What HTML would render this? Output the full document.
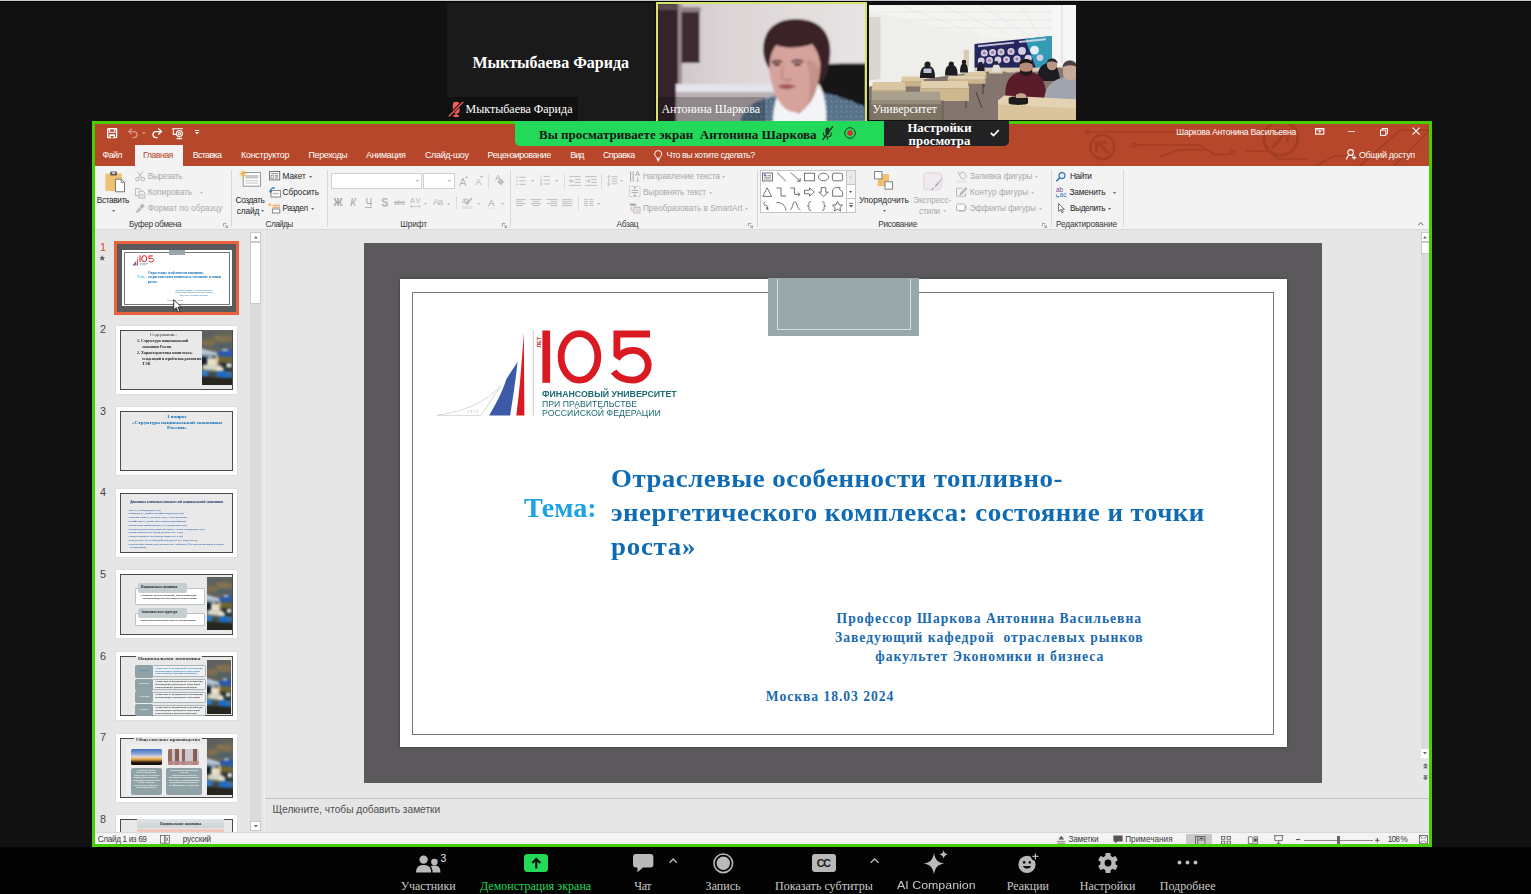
<!DOCTYPE html>
<html lang="ru">
<head>
<meta charset="utf-8">
<title>Zoom</title>
<style>
*{box-sizing:border-box;margin:0;padding:0}
html,body{width:1531px;height:894px;overflow:hidden;background:#111}
body{position:relative;font-family:"Liberation Sans",sans-serif;}
.a{position:absolute}
.t{position:absolute;white-space:nowrap;line-height:1}
svg{overflow:visible}
</style>
</head>
<body>
<!-- s_tiles -->
<div class="a" style="left:0.00px;top:0.00px;width:1531.00px;height:1.00px;background:#c6cad1;"></div>
<div class="a" style="left:0.00px;top:1.00px;width:1531.00px;height:1.00px;background:#030303;"></div>
<div class="a" style="left:0.00px;top:847.00px;width:1531.00px;height:47.00px;background:#030303;"></div>
<div class="a" style="left:447.00px;top:3.00px;width:207.00px;height:118.00px;background:#1a1a1a;"></div>
<div class="t" style="left:472.50px;top:55.10px;font-size:16.00px;color:#fff;font-family:'Liberation Serif',serif;letter-spacing:-0.023px;font-weight:bold;">Мыктыбаева Фарида</div>
<div class="a" style="left:447.00px;top:97.00px;width:131.00px;height:24.00px;background:#111;"></div>
<div class="t" style="left:465.50px;top:102.95px;font-size:12.00px;color:#fff;font-family:'Liberation Serif',serif;">Мыктыбаева Фарида</div>
<svg class="a" style="left:448.00px;top:100.00px;" width="16" height="18" viewBox="0 0 16 18"><g>
<rect x="4.800" y="1.800" width="6.800" height="11.800" rx="3.400" fill="#ef5f5c"/>
<path d="M8.200 13.600v2M5.600 16h5.200" stroke="#ef5f5c" stroke-width="1.800" fill="none"/>
<path d="M15.200 1.600L1.600 15.400" stroke="#111" stroke-width="3" fill="none"/>
<path d="M14.800 2.200L1.200 16" stroke="#ef5f5c" stroke-width="1.300" stroke-linecap="round" fill="none"/></g></svg>
<div class="a" style="left:656px;top:2px;width:211px;height:121px;border:2px solid #d7e36e;overflow:hidden;background:#d9d2d4"><svg class="a" style="left:0;top:0" width="207" height="117" viewBox="658 4 207 117">
<defs><filter id="bl" x="-5%" y="-5%" width="110%" height="110%"><feGaussianBlur stdDeviation="0.9"/></filter>
<linearGradient id="wall" x1="0" x2="1" y1="0" y2="0"><stop offset="0" stop-color="#c9c0c3"/><stop offset="0.35" stop-color="#dcd5d6"/><stop offset="1" stop-color="#e9e5e5"/></linearGradient>
<pattern id="blouse" width="5" height="5" patternUnits="userSpaceOnUse"><rect width="5" height="5" fill="#3f5f7c"/><circle cx="1.3" cy="1.3" r="0.9" fill="#c9d6e0"/><circle cx="3.8" cy="3.6" r="0.8" fill="#9fb6c8"/></pattern></defs>
<g filter="url(#bl)">
<rect x="650" y="0" width="225" height="125" fill="url(#wall)"/>
<rect x="650" y="0" width="28" height="125" fill="#35232b"/>
<rect x="658" y="4" width="20" height="6" fill="#5b4a4e"/>
<rect x="678" y="4" width="4" height="86" fill="#9a8d90"/>
<rect x="681.5" y="12" width="18" height="51" fill="#3d2b33"/>
<rect x="681.5" y="7" width="19" height="5" fill="#8f8286"/>
<rect x="676" y="84" width="100" height="8" fill="#e4e3ea"/>
<rect x="676" y="92" width="100" height="30" fill="#b9b0b4"/>
<path d="M814 70c3-6 10-7 52-6.500v46l-52 0z" fill="#131318"/>
<path d="M740 122c4-16 16-22 36-26l44-4c20 4 34 10 48 16v14z" fill="url(#blouse)"/>
<path d="M773 122c0-14 3-26 8-34l38-4c5 8 8 22 7 38z" fill="#f3f4f7"/>
<path d="M784 92c2 10 8 18 14 22c8-4 14-14 16-26z" fill="#cf9a93"/>
<path d="M768.500 60c-1-16 8-24 24-24c18 0 28 6 28 26c0 22-8 50-26 50c-16 0-25-28-26.500-52z" fill="#d6a39c"/>
<path d="M806 60c6 0 12 4 13 10c0 14-4 28-12 36c4-14 4-30-1-46z" fill="#c18c86" opacity="0.800"/>
<path d="M763.800 56c-3-22 8-37 32-37c24 0 36 14 34.500 36c-1 12-4 24-10 29c2-16 0-30-8-40c-10 4-26 5-36 1c-5 6-7 14-6.500 24c-3-3-5-8-6-13z" fill="#3a2128"/>
<path d="M772 62.500c3-2 7-2 10-0.500M791.700 62c3.500-2 8-2 11.500 0" stroke="#5a3638" stroke-width="2.200" fill="none"/>
<ellipse cx="777" cy="64.600" rx="3.200" ry="1.300" fill="#3e2a2e"/><ellipse cx="797.500" cy="64.400" rx="3.400" ry="1.300" fill="#3e2a2e"/>
<path d="M783 66c-1 6-2 10-1 13c3 1.500 7 1.500 10 0" stroke="#b9827c" stroke-width="1.600" fill="none"/>
<path d="M777.700 86c5-2.500 12-2.500 18.300 0c-5 4-13 4.500-18.300 0z" fill="#a5565a"/>
</g>
<rect x="658" y="97" width="107" height="24" fill="#000" opacity="0.22"/>
</svg></div>
<div class="t" style="left:661.50px;top:102.75px;font-size:12.00px;color:#fff;font-family:'Liberation Serif',serif;letter-spacing:-0.050px;">Антонина Шаркова</div>
<div class="a" style="left:869px;top:5px;width:207px;height:115px;overflow:hidden;background:#dcdad6"><svg class="a" style="left:0;top:0" width="207" height="115" viewBox="869 5 207 115">
<defs><filter id="bl2" x="-5%" y="-5%" width="110%" height="110%"><feGaussianBlur stdDeviation="0.55"/></filter></defs>
<g filter="url(#bl2)">
<rect x="860" y="0" width="225" height="125" fill="#efefec"/>
<path d="M860 0h225v37l-33-1l-54 2.400l-24-4l-114-26z" fill="#f3f3f2"/>
<g stroke="#dcdcdb" stroke-width="0.500" fill="none"><path d="M900 5l80 30M940 5l70 30M980 5l50 31M1020 5l20 31M880 12h190M905 20h160M935 28h120"/></g>
<path d="M869 10.500l105.200 27.800v36l-105.200 14z" fill="#eeeeeb"/>
<path d="M869 17h11.500v62l-11.500 1.500z" fill="#d9d7d0"/>
<rect x="1052" y="5" width="30" height="60" fill="#f6f6f6"/><path d="M1062 5v58" stroke="#e2e2e2" stroke-width="1.500"/>
<path d="M860 88l114-16l78-5l33 2v52h-225z" fill="#84766e"/>
<path d="M974.500 43.900L1051.700 36.100V68H974.500z" fill="#25255c"/>
<path d="M1025 38.800L1051.700 36.100V68H1036z" fill="#35b0c6" opacity="0.850"/>
<path d="M978 46.200L1014 42.600M1019 42L1046 39.300" stroke="#dcdcf0" stroke-width="1.900" opacity="0.850"/>
<g fill="#d2cee4"><circle cx="984.300" cy="52.900" r="3.500"/><circle cx="992.600" cy="52.400" r="3.500"/><circle cx="1001" cy="52" r="3.500"/><circle cx="1011" cy="51.500" r="3.600"/><circle cx="1022" cy="50.900" r="3.900"/><circle cx="1034.500" cy="50.200" r="4.400" fill="#e4f0f6"/><circle cx="981.200" cy="60.800" r="3.400"/><circle cx="989.500" cy="60.400" r="3.400"/><circle cx="998" cy="60" r="3.400"/><circle cx="1006.600" cy="59.600" r="3.400"/><circle cx="1017" cy="59" r="3.600"/><circle cx="1028.200" cy="58.400" r="3.600"/><circle cx="1040" cy="57.800" r="3.300"/></g>
<g fill="#7a3a5a" opacity="0.500"><circle cx="984.300" cy="52.900" r="1.700"/><circle cx="992.600" cy="52.400" r="1.700"/><circle cx="1001" cy="52" r="1.700"/><circle cx="1011" cy="51.500" r="1.700"/><circle cx="989.500" cy="60.400" r="1.700"/><circle cx="1006.600" cy="59.600" r="1.700"/><circle cx="1017" cy="59" r="1.700"/></g>
<rect x="963.600" y="50" width="5.400" height="17" fill="#d9ccb6"/>
<rect x="974.200" y="67.600" width="78" height="4" fill="#d8cdbb"/>
<g stroke="#2a2522" stroke-width="0.700" fill="none"><path d="M968 75v10M984 75v12M950 80v12M983 80v14M924 90v16M966 90v18M976 92l6 16M904 82v10M921 82v10M875 92v10M903 91v10"/></g>
<g><path d="M965 72h20.500l1 3.200h-22z" fill="#dcc9a6"/><path d="M964.500 75.200h22v3h-22z" fill="#c9b48c"/>
<path d="M948.600 75.500h35.500l1.500 4.300h-38z" fill="#dfcdab"/><path d="M947.600 79.800h38v4h-38z" fill="#c9b48c"/>
<path d="M989 70.500h13l1 3h-14z" fill="#dcc9a6"/><path d="M1006 69.500h9v3h-9z" fill="#dcc9a6"/>
<path d="M902 76.600h21l1 4.400h-23z" fill="#dcc9a6"/><path d="M901 81h23v5.500h-23z" fill="#c7b189"/>
<path d="M921.600 81h46l1.500 7.600h-49z" fill="#e0cfae"/><path d="M920 88.600h49v12.500h-49z" fill="#cdb88f"/>
<path d="M872.800 82h32l1 8h-34z" fill="#d9c6a2"/><path d="M871.800 90h34v6h-34z" fill="#bfa983"/>
<path d="M872.800 92l66.800-0.500l2 13h-70.800z" fill="#aaa08e"/><path d="M870.800 104.500h70.800v16h-70.800z" fill="#8f8471"/></g>
<g fill="#1f1d22"><path d="M920 78c0-9 2-12 7.500-12s7.500 3 7.500 12z"/><circle cx="927.500" cy="64.500" r="3"/><path d="M945 75.500c0-8 2-10.500 6.300-10.500s6.300 2.500 6.300 10.500z"/><circle cx="951.300" cy="64" r="2.600"/><path d="M960 72.500c0-7 1.500-9 4-9s4 2 4 9z"/><circle cx="964" cy="62" r="2.300"/><path d="M977 71c0-5 1.500-6.500 3.800-6.500s3.800 1.500 3.800 6.500z"/><circle cx="980.800" cy="63.600" r="1.900"/></g>
<path d="M923.500 68.500h8v4.500h-8z" fill="#b9c4d4"/><path d="M992 72c0-6 2-8 4.300-8s4.300 2 4.300 8z" fill="#e2ded6"/><circle cx="996.300" cy="63" r="2" fill="#2a2426"/>
<path d="M1037 81c0-12 5-18 12-18s10 6 11 18z" fill="#1b1b21"/><circle cx="1052" cy="65" r="5.200" fill="#b79686"/><path d="M1046.600 63c1-6 10.500-6 11 0.500c-3-2.500-8-2.500-11-0.500z" fill="#2a2426"/>
<path d="M1005.700 99c-2-18 5-27.500 20-27.500s20.500 9.500 20.600 27.500z" fill="#5a1f29"/>
<path d="M1019.600 64.500c0-7 13-7 13 0v5c0 7-13 7-13 0z" fill="#b98c78"/><path d="M1019.300 65c-0.500-8 14-8 13.600 0c-3-3.500-10-3.500-13.600 0z" fill="#1c1718"/><path d="M1020 69.500c2 3 10 3 12.200 0v3.500c-2 4-10 4-12.200 0z" fill="#231b1d"/>
<path d="M1044 103c0-19 11-27 34-27v30z" fill="#a0a5ad"/><path d="M1063 66c0-8 14-8 14 0v8c0 8-14 8-14 0z" fill="#c6aa9a"/><path d="M1062.600 67.500c0-9 14-9 15 0c-4-3-11-3-15 0z" fill="#4a4244"/>
<path d="M998 100l80 3.500v18h-80z" fill="#d9c49c"/><path d="M998 100.500l6-5l74 4v9l-80-4z" fill="#e4d3b3"/>
<path d="M1008.700 98.500c0-3 19.300-3 19.300 0v4.500c0 2.500-19.300 2.500-19.300 0z" fill="#1b1a1c"/>
<path d="M1016 95c2-2.500 8-2.500 10 0v3h-10z" fill="#c9a48c"/>
</g>
<rect x="869" y="100" width="75" height="20" fill="#000" opacity="0.120"/>
</svg></div>
<div class="t" style="left:872.50px;top:102.75px;font-size:12.00px;color:#fff;font-family:'Liberation Serif',serif;letter-spacing:-0.027px;">Университет</div>
<!-- s_ppt_top -->
<div class="a" style="left:92.00px;top:121.00px;width:1340.00px;height:726.00px;background:#48cc06;"></div>
<div class="a" style="left:95.00px;top:124.00px;width:1334.00px;height:42.00px;background:#b7472a;"></div>
<div class="a" style="left:95.00px;top:166.00px;width:1334.00px;height:64.00px;background:#f3f3f3;"></div>
<div class="a" style="left:95.00px;top:229.00px;width:1334.00px;height:1.00px;background:#dadada;"></div>
<div class="a" style="left:95.00px;top:230.00px;width:1334.00px;height:603.00px;background:#e6e6e6;"></div>
<div class="a" style="left:95.00px;top:833.00px;width:1334.00px;height:11.00px;background:#f3f3f3;"></div>
<div class="a" style="left:1060px;top:124px;width:369px;height:42px;overflow:hidden"><svg class="a" style="left:0.00px;top:0.00px;" width="369" height="42" viewBox="0 0 369 42"><g fill="none" stroke="#a23d23" stroke-width="1.700" opacity="0.950">
<circle cx="42.400" cy="23" r="12" stroke-width="2.600"/><path d="M36 29l11-11M37 17h10v10" stroke-width="2.600" transform="rotate(-90 42.400 23)"/>
<circle cx="27.400" cy="8" r="1.900"/><path d="M29.400 8h112"/>
<circle cx="74.300" cy="21" r="1.900"/><path d="M76.300 21h63l15 9.400h16"/><circle cx="172.900" cy="28.400" r="1.900"/>
<path d="M100 33l18-7h28"/>
<circle cx="220.800" cy="14.200" r="17" stroke-width="3"/><path d="M212 24l15-17M216 6.500h11.500v11" stroke-width="3"/>
<path d="M186 27h22l10 8h30"/>
<path d="M300 42l40-36h29"/><path d="M332 44l37-37"/><path d="M252 44l22-12h38"/>
</g></svg>
</div>
<svg class="a" style="left:107.20px;top:127.50px;" width="10.4" height="10.4" viewBox="0 0 10.4 10.4"><g fill="none" stroke="#fff"><rect x="0.700" y="0.700" width="8.900" height="8.900" rx="0.600" stroke-width="1.400"/><path d="M2.500 0.700v3.600h5.300v-3.600" stroke-width="1.100"/><rect x="2.400" y="6.300" width="5.500" height="3.300" fill="#fff" stroke="none"/><rect x="3.700" y="8" width="2.900" height="1.700" fill="#b7472a" stroke="none"/></g></svg>
<svg class="a" style="left:128.00px;top:127.50px;" width="10" height="10" viewBox="0 0 10 10"><g fill="none" stroke="#d99886" stroke-width="1.3"><path d="M0.8 3.6h5.2a3 3 0 0 1 0 6h-1.6"/><path d="M3.6 0.8l-2.8 2.8l2.8 2.8"/></g></svg>
<svg class="a" style="left:141.60px;top:131.60px;" width="4" height="2.4" viewBox="0 0 4 2.4"><path d="M0 0h3.6l-1.8 2.2z" fill="#d99886"/></svg>
<svg class="a" style="left:152.00px;top:127.50px;" width="10" height="10" viewBox="0 0 10 10"><g fill="none" stroke="#fff" stroke-width="1.4"><path d="M9.2 3.6h-5.2a3 3 0 0 0 0 6h1.6"/><path d="M6.4 0.6l3 3l-3 3"/></g></svg>
<svg class="a" style="left:172.00px;top:127.50px;" width="11.5" height="11.5" viewBox="0 0 11.5 11.5"><g fill="none" stroke="#fff" stroke-width="1.1"><path d="M0.3 0.8h10.6M1.3 0.8v5.6h3.4"/><circle cx="7.4" cy="5.6" r="3"/><circle cx="7.4" cy="5.6" r="1.1"/><path d="M7.4 8.6v1.6M4.6 10.6h5.6"/></g></svg>
<svg class="a" style="left:195.20px;top:130.40px;" width="4.4" height="4.4" viewBox="0 0 4.4 4.4"><path d="M0 0h4.2v1h-4.2zM0 2.1h4.2l-2.1 2.1z" fill="#fff"/></svg>
<div class="t" style="left:1176.30px;top:128.32px;font-size:8.60px;color:#fff;letter-spacing:-0.236px;">Шаркова Антонина Васильевна</div>
<svg class="a" style="left:1314.80px;top:128.20px;" width="9.4" height="6.8" viewBox="0 0 9.4 6.8"><g fill="none" stroke="#fff" stroke-width="1.1"><rect x="0.55" y="0.55" width="8.3" height="5.6"/><path d="M0.5 2h8.4M4.7 5.2v-2.4M3.5 3.9l1.2-1.2l1.2 1.2" stroke-width="0.9"/></g></svg>
<div class="a" style="left:1348.00px;top:131.30px;width:7.20px;height:1.10px;background:#f0d6ce;"></div>
<svg class="a" style="left:1379.60px;top:127.60px;" width="8" height="8" viewBox="0 0 8 8"><g fill="none" stroke="#fff" stroke-width="1"><rect x="0.5" y="2.1" width="5.3" height="5.3"/><path d="M2.2 2v-1.5h5.3v5.3h-1.6"/></g></svg>
<svg class="a" style="left:1411.60px;top:127.40px;" width="8.2" height="8.2" viewBox="0 0 8.2 8.2"><path d="M0.6 0.6l7 7M7.6 0.6l-7 7" stroke="#fff" stroke-width="1.15" fill="none"/></svg>
<div class="a" style="left:134.50px;top:145.00px;width:48.50px;height:21.00px;background:#f3f3f3;"></div>
<div class="t" style="left:102.50px;top:150.67px;font-size:8.90px;color:#fff;letter-spacing:-0.594px;">Файл</div>
<div class="t" style="left:143.00px;top:150.67px;font-size:8.90px;color:#b7472a;letter-spacing:-0.562px;">Главная</div>
<div class="t" style="left:192.70px;top:150.67px;font-size:8.90px;color:#fff;letter-spacing:-0.630px;">Вставка</div>
<div class="t" style="left:241.00px;top:150.67px;font-size:8.90px;color:#fff;letter-spacing:-0.225px;">Конструктор</div>
<div class="t" style="left:308.60px;top:150.67px;font-size:8.90px;color:#fff;letter-spacing:-0.364px;">Переходы</div>
<div class="t" style="left:366.10px;top:150.67px;font-size:8.90px;color:#fff;letter-spacing:-0.283px;">Анимация</div>
<div class="t" style="left:424.90px;top:150.67px;font-size:8.90px;color:#fff;letter-spacing:-0.255px;">Слайд-шоу</div>
<div class="t" style="left:487.60px;top:150.67px;font-size:8.90px;color:#fff;letter-spacing:-0.387px;">Рецензирование</div>
<div class="t" style="left:570.20px;top:150.67px;font-size:8.90px;color:#fff;letter-spacing:-0.851px;">Вид</div>
<div class="t" style="left:602.90px;top:150.67px;font-size:8.90px;color:#fff;letter-spacing:-0.436px;">Справка</div>
<div class="t" style="left:666.60px;top:150.67px;font-size:8.90px;color:#fff;letter-spacing:-0.457px;">Что вы хотите сделать?</div>
<svg class="a" style="left:654.00px;top:149.60px;" width="8.4" height="11.6" viewBox="0 0 8.4 11.6"><g fill="none" stroke="#fff" stroke-width="1"><path d="M2.6 8.2c0-1.4-1.9-2.2-1.9-4.2a3.5 3.5 0 0 1 7 0c0 2-1.9 2.8-1.9 4.2z"/><path d="M2.8 9.6h2.8M3.2 10.9h2"/></g></svg>
<svg class="a" style="left:1345.60px;top:149.40px;" width="10.6" height="11.2" viewBox="0 0 10.6 11.2"><g fill="none" stroke="#fff" stroke-width="1.1"><circle cx="4.6" cy="3.4" r="2.8"/><path d="M0.5 10.6c0.2-3 1.8-4.4 4.1-4.4c1 0 1.8 0.3 2.4 0.8"/><path d="M8.2 6.6v4M6.2 8.6h4"/></g></svg>
<div class="t" style="left:1359.00px;top:151.17px;font-size:8.90px;color:#fff;letter-spacing:-0.318px;">Общий доступ</div>
<!-- s_ribbon -->
<svg class="a" style="left:104.50px;top:171.20px;" width="20" height="21.2" viewBox="0 0 20 21.2"><rect x="0.3" y="2.6" width="16.6" height="17.4" rx="0.8" fill="#eec274"/>
<rect x="5.2" y="0.4" width="6.8" height="4.2" rx="0.8" fill="#5f5f5f"/><rect x="7.2" y="1.3" width="2.8" height="1.5" fill="#f3f3f3"/>
<path d="M10.5 8.2h5.8l3.2 3.2v9.4h-9z" fill="#fff" stroke="#6a6a6a" stroke-width="0.9"/><path d="M16.2 8.3v3.2h3.2" fill="none" stroke="#6a6a6a" stroke-width="0.8"/></svg>
<div class="t" style="left:96.80px;top:195.97px;font-size:8.30px;color:#262626;letter-spacing:-0.369px;">Вставить</div>
<svg class="a" style="left:111.60px;top:209.60px;" width="3.4" height="2.2" viewBox="0 0 3.4 2.2"><path d="M0 0h3.2l-1.6 2z" fill="#6a6a6a"/></svg>
<svg class="a" style="left:134.60px;top:171.40px;" width="10.4" height="10.4" viewBox="0 0 10.4 10.4"><g fill="none" stroke="#b4b4b4" stroke-width="1"><path d="M2.4 0.4l4.6 6.6M8 0.4l-4.6 6.6"/><circle cx="2.5" cy="8.2" r="1.8"/><circle cx="7.9" cy="8.2" r="1.8"/></g></svg>
<div class="t" style="left:147.70px;top:172.27px;font-size:8.30px;color:#a9a9a9;letter-spacing:-0.317px;">Вырезать</div>
<svg class="a" style="left:134.60px;top:187.60px;" width="10.6" height="10.6" viewBox="0 0 10.6 10.6"><g fill="none" stroke="#b4b4b4" stroke-width="0.9"><path d="M0.5 0.5h4l1.6 1.6v5.6h-5.6z"/><path d="M4 3.2h4.2l1.8 1.8v5.2h-6z" fill="#f3f3f3"/><path d="M5.2 6.4h3.4M5.2 8h3.4" stroke-width="0.7"/></g></svg>
<div class="t" style="left:147.70px;top:188.17px;font-size:8.30px;color:#a9a9a9;letter-spacing:-0.021px;">Копировать</div>
<svg class="a" style="left:199.80px;top:192.00px;" width="3.4" height="2.2" viewBox="0 0 3.4 2.2"><path d="M0 0h3.2l-1.6 2z" fill="#bcbcbc"/></svg>
<svg class="a" style="left:134.60px;top:203.40px;" width="11" height="10.6" viewBox="0 0 11 10.6"><g fill="#b4b4b4"><path d="M7.2 0.6l2.6 2.6l-3 2.6l-2.2-2.2z"/><path d="M4.2 4l2.4 2.4l-3.6 3.4l-2.8-0.4z" fill="#c9b7c4"/></g></svg>
<div class="t" style="left:147.70px;top:204.17px;font-size:8.30px;color:#a9a9a9;letter-spacing:0.017px;">Формат по образцу</div>
<div class="t" style="left:129.00px;top:220.07px;font-size:8.30px;color:#3a3a3a;letter-spacing:-0.336px;">Буфер обмена</div>
<svg class="a" style="left:222.60px;top:222.80px;" width="5" height="5" viewBox="0 0 5 5"><g fill="none" stroke="#8c8c8c" stroke-width="0.8"><path d="M0.4 3.2v-2.8h2.8"/><path d="M2 2l2.4 2.4M4.5 2.6v1.9h-1.9"/></g></svg>
<div class="a" style="left:230.50px;top:169.50px;width:1.00px;height:57.50px;background:#d8d8d8;"></div>
<svg class="a" style="left:238.60px;top:169.80px;" width="22" height="19.4" viewBox="0 0 22 19.4"><rect x="4.2" y="2.6" width="17.2" height="13.6" fill="#fff" stroke="#8a8a8a" stroke-width="0.9"/>
<rect x="6.4" y="5" width="12.8" height="3.6" fill="#c9c9c9"/><path d="M6.4 10.8h12.8M6.4 13h12.8" stroke="#b5b5b5" stroke-width="0.8"/>
<g stroke="#f0b13c" stroke-width="1"><path d="M4 0.2v7.2M0.4 3.8h7.2M1.5 1.3l5 5M6.5 1.3l-5 5"/></g></svg>
<div class="t" style="left:235.50px;top:195.97px;font-size:8.30px;color:#262626;letter-spacing:-0.357px;">Создать</div>
<div class="t" style="left:236.70px;top:206.67px;font-size:8.30px;color:#262626;letter-spacing:-0.122px;">слайд</div>
<svg class="a" style="left:261.20px;top:210.40px;" width="3.4" height="2.2" viewBox="0 0 3.4 2.2"><path d="M0 0h3.2l-1.6 2z" fill="#6a6a6a"/></svg>
<svg class="a" style="left:269.00px;top:171.00px;" width="11.4" height="9.6" viewBox="0 0 11.4 9.6"><g fill="none" stroke="#6a6a6a" stroke-width="0.9"><rect x="0.5" y="0.5" width="10.2" height="8.4" fill="#fff"/><path d="M2 2.4h7.2M2 4.2h2.6v3.2h-2.6zM6 4.4h3.2M6 5.8h3.2M6 7.2h3.2" stroke-width="0.7"/></g></svg>
<div class="t" style="left:282.60px;top:172.27px;font-size:8.30px;color:#262626;letter-spacing:-0.098px;">Макет</div>
<svg class="a" style="left:308.60px;top:176.20px;" width="3.4" height="2.2" viewBox="0 0 3.4 2.2"><path d="M0 0h3.2l-1.6 2z" fill="#6a6a6a"/></svg>
<svg class="a" style="left:268.60px;top:186.60px;" width="12" height="10.6" viewBox="0 0 12 10.6"><g fill="none"><rect x="2" y="3.6" width="9.4" height="6.4" fill="#fff" stroke="#7a7a7a" stroke-width="0.9"/><path d="M3.6 6.6h6" stroke="#c0c0c0" stroke-width="1.6"/><path d="M1.4 5.4c-0.6-3 1.6-4.8 4.6-4.4" stroke="#2e75b6" stroke-width="1.2"/><path d="M0 3.4l1.4 2.6l2-1.8z" fill="#2e75b6"/></g></svg>
<div class="t" style="left:282.60px;top:188.17px;font-size:8.30px;color:#262626;letter-spacing:-0.042px;">Сбросить</div>
<svg class="a" style="left:268.40px;top:203.00px;" width="12.4" height="10.4" viewBox="0 0 12.4 10.4"><g fill="none"><path d="M1.8 0v3.6M0 1.8h3.6" stroke="#f0b13c" stroke-width="0.9"/><path d="M4.6 2.2h7.4M4.6 4.2h7.4" stroke="#e59a3c" stroke-width="1.1"/><rect x="4.4" y="6" width="7.4" height="4" fill="#fff" stroke="#7a7a7a" stroke-width="0.9"/></g></svg>
<div class="t" style="left:282.60px;top:204.17px;font-size:8.30px;color:#262626;letter-spacing:-0.407px;">Раздел</div>
<svg class="a" style="left:310.60px;top:208.20px;" width="3.4" height="2.2" viewBox="0 0 3.4 2.2"><path d="M0 0h3.2l-1.6 2z" fill="#6a6a6a"/></svg>
<div class="t" style="left:265.60px;top:220.07px;font-size:8.30px;color:#3a3a3a;letter-spacing:-0.640px;">Слайды</div>
<div class="a" style="left:327.00px;top:169.50px;width:1.00px;height:57.50px;background:#d8d8d8;"></div>
<div class="a" style="left:331.00px;top:173.20px;width:91.40px;height:16.20px;background:#fff;border:1px solid #d0d0d0"></div>
<div class="a" style="left:422.60px;top:173.20px;width:32.20px;height:16.20px;background:#fff;border:1px solid #d0d0d0"></div>
<svg class="a" style="left:416.20px;top:180.40px;" width="3.4" height="2.2" viewBox="0 0 3.4 2.2"><path d="M0 0h3.2l-1.6 2z" fill="#b0b0b0"/></svg>
<svg class="a" style="left:448.20px;top:180.40px;" width="3.4" height="2.2" viewBox="0 0 3.4 2.2"><path d="M0 0h3.2l-1.6 2z" fill="#b0b0b0"/></svg>
<div class="t" style="left:459.30px;top:176.83px;font-size:10.60px;color:#b4b4b4;">A</div>
<svg class="a" style="left:465.40px;top:175.80px;" width="3.2" height="2.2" viewBox="0 0 3.2 2.2"><path d="M0 2h3.2l-1.6-2z" fill="#b4b4b4"/></svg>
<div class="t" style="left:475.40px;top:178.35px;font-size:8.80px;color:#b4b4b4;">A</div>
<svg class="a" style="left:480.20px;top:175.80px;" width="3.2" height="2.2" viewBox="0 0 3.2 2.2"><path d="M0 0h3.2l-1.6 2z" fill="#b4b4b4"/></svg>
<div class="a" style="left:488.40px;top:174.40px;width:1.00px;height:14.40px;background:#dcdcdc;"></div>
<svg class="a" style="left:495.00px;top:175.40px;" width="10.4" height="10.8" viewBox="0 0 10.4 10.8"><g><path d="M5.4 3.2l4 3.4l-3.2 3.8l-4-3.4z" fill="#c4bcc4"/><path d="M0.6 5.4l2-5h0.8l2 5M1.4 3.6h2.8" fill="none" stroke="#b4b4b4" stroke-width="0.8"/></g></svg>
<div class="t" style="left:333.60px;top:197.53px;font-size:10.00px;color:#a4a4a4;font-weight:bold;">Ж</div>
<div class="t" style="left:350.20px;top:197.53px;font-size:10.00px;color:#a4a4a4;font-style:italic;">К</div>
<div class="t" style="left:365.60px;top:197.53px;font-size:10.00px;color:#a4a4a4;">Ч</div>
<div class="a" style="left:365.40px;top:207.00px;width:7.00px;height:0.90px;background:#b4b4b4;"></div>
<div class="t" style="left:381.20px;top:197.53px;font-size:10.00px;color:#a4a4a4;text-shadow:0.7px 0.7px 0 #d4d4d4;">S</div>
<div class="t" style="left:394.00px;top:199.34px;font-size:7.40px;color:#b4b4b4;letter-spacing:-0.316px;text-decoration:line-through;">abc</div>
<div class="t" style="left:410.00px;top:197.31px;font-size:7.20px;color:#b4b4b4;letter-spacing:1.429px;">AV</div>
<svg class="a" style="left:410.00px;top:204.60px;" width="10.6" height="3" viewBox="0 0 10.6 3"><path d="M0.4 1.5h9.8M2 0l-1.6 1.5l1.6 1.5M8.6 0l1.6 1.5l-1.6 1.5" fill="none" stroke="#b4b4b4" stroke-width="0.7"/></svg>
<svg class="a" style="left:423.80px;top:203.00px;" width="3.4" height="2.2" viewBox="0 0 3.4 2.2"><path d="M0 0h3.2l-1.6 2z" fill="#bcbcbc"/></svg>
<div class="t" style="left:433.00px;top:198.21px;font-size:9.20px;color:#b4b4b4;letter-spacing:-1.153px;">Aa</div>
<svg class="a" style="left:446.80px;top:203.00px;" width="3.4" height="2.2" viewBox="0 0 3.4 2.2"><path d="M0 0h3.2l-1.6 2z" fill="#bcbcbc"/></svg>
<div class="a" style="left:456.20px;top:196.40px;width:1.00px;height:14.00px;background:#dcdcdc;"></div>
<div class="t" style="left:461.80px;top:197.61px;font-size:6.60px;color:#b4b4b4;letter-spacing:-1.221px;">aby</div>
<svg class="a" style="left:464.00px;top:197.00px;" width="9" height="9" viewBox="0 0 9 9"><path d="M7.6 0.4l1 1l-5.4 6l-1.8 0.4l0.4-1.8z" fill="#b9b9b9"/></svg>
<div class="a" style="left:461.60px;top:206.40px;width:11.40px;height:2.20px;background:#e6dfe6;"></div>
<svg class="a" style="left:477.40px;top:203.00px;" width="3.4" height="2.2" viewBox="0 0 3.4 2.2"><path d="M0 0h3.2l-1.6 2z" fill="#bcbcbc"/></svg>
<div class="t" style="left:488.10px;top:197.70px;font-size:9.80px;color:#a4a4a4;">A</div>
<div class="a" style="left:488.00px;top:207.20px;width:7.00px;height:1.60px;background:#ececec;"></div>
<svg class="a" style="left:501.20px;top:203.00px;" width="3.4" height="2.2" viewBox="0 0 3.4 2.2"><path d="M0 0h3.2l-1.6 2z" fill="#bcbcbc"/></svg>
<div class="t" style="left:400.20px;top:220.07px;font-size:8.30px;color:#3a3a3a;letter-spacing:-0.127px;">Шрифт</div>
<svg class="a" style="left:502.00px;top:222.80px;" width="5" height="5" viewBox="0 0 5 5"><g fill="none" stroke="#8c8c8c" stroke-width="0.8"><path d="M0.4 3.2v-2.8h2.8"/><path d="M2 2l2.4 2.4M4.5 2.6v1.9h-1.9"/></g></svg>
<div class="a" style="left:510.40px;top:169.50px;width:1.00px;height:57.50px;background:#d8d8d8;"></div>
<svg class="a" style="left:516.00px;top:175.60px;" width="10" height="10" viewBox="0 0 10 10"><g fill="none" stroke="#b4b4b4" stroke-width="0.8"><path d="M3.4 1.2h6.2M3.4 4.8h6.2M3.4 8.4h6.2"/><path d="M0.4 1.2h1.3M0.4 4.8h1.3M0.4 8.4h1.3" stroke-width="1.3"/></g></svg>
<svg class="a" style="left:531.40px;top:180.40px;" width="3.4" height="2.2" viewBox="0 0 3.4 2.2"><path d="M0 0h3.2l-1.6 2z" fill="#bcbcbc"/></svg>
<svg class="a" style="left:540.00px;top:175.20px;" width="10.4" height="11" viewBox="0 0 10.4 11"><g fill="none" stroke="#b4b4b4" stroke-width="0.8"><path d="M3.6 1.4h6.4M3.6 5.2h6.4M3.6 9h6.4"/><path d="M0.9 0.2v2.4M0.3 4.2h1.3v1l-1.3 1h1.4M0.3 7.8h1.3v1.2h-0.9h0.9v1.2h-1.3" stroke-width="0.6"/></g></svg>
<svg class="a" style="left:555.00px;top:180.40px;" width="3.4" height="2.2" viewBox="0 0 3.4 2.2"><path d="M0 0h3.2l-1.6 2z" fill="#bcbcbc"/></svg>
<div class="a" style="left:564.20px;top:174.40px;width:1.00px;height:14.40px;background:#dcdcdc;"></div>
<svg class="a" style="left:568.80px;top:175.60px;" width="12" height="10" viewBox="0 0 12 10"><g fill="none" stroke="#b4b4b4" stroke-width="0.8"><path d="M0.2 0.6h11.6M6.2 3.6h5.6M6.2 6.4h5.6M0.2 9.4h11.6"/><path d="M0.6 5h4.6M2.4 3.2l-1.8 1.8l1.8 1.8" stroke-width="0.9"/></g></svg>
<svg class="a" style="left:585.00px;top:175.60px;" width="12" height="10" viewBox="0 0 12 10"><g fill="none" stroke="#b4b4b4" stroke-width="0.8"><path d="M0.2 0.6h11.6M6.2 3.6h5.6M6.2 6.4h5.6M0.2 9.4h11.6"/><path d="M0.4 5h4.6M3.2 3.2l1.8 1.8l-1.8 1.8" stroke-width="0.9"/></g></svg>
<div class="a" style="left:601.20px;top:174.40px;width:1.00px;height:14.40px;background:#dcdcdc;"></div>
<svg class="a" style="left:606.60px;top:175.20px;" width="10.6" height="11" viewBox="0 0 10.6 11"><g fill="none" stroke="#b4b4b4" stroke-width="0.8"><path d="M4.6 1.6h5.8M4.6 4h5.8M4.6 6.4h5.8M4.6 8.8h5.8"/><path d="M1.8 0.6v9.8M0.2 2.2l1.6-1.6l1.6 1.6M0.2 8.8l1.6 1.6l1.6-1.6" stroke-width="0.8"/></g></svg>
<svg class="a" style="left:620.40px;top:180.40px;" width="3.4" height="2.2" viewBox="0 0 3.4 2.2"><path d="M0 0h3.2l-1.6 2z" fill="#bcbcbc"/></svg>
<svg class="a" style="left:516.00px;top:198.60px;" width="10.4" height="8" viewBox="0 0 10.4 8"><path d="M0 0.6H10M0 2.6H6.6M0 4.6H10M0 6.6H6.6" stroke="#b4b4b4" stroke-width="0.8" fill="none"/></svg>
<svg class="a" style="left:531.40px;top:198.60px;" width="10.4" height="8" viewBox="0 0 10.4 8"><path d="M0 0.6H10.2M1.8 2.6H8.4M0 4.6H10.2M1.8 6.6H8.4" stroke="#b4b4b4" stroke-width="0.8" fill="none"/></svg>
<svg class="a" style="left:546.70px;top:198.60px;" width="10.4" height="8" viewBox="0 0 10.4 8"><path d="M0 0.6H10.2M3.6 2.6H10.2M0 4.6H10.2M3.6 6.6H10.2" stroke="#b4b4b4" stroke-width="0.8" fill="none"/></svg>
<svg class="a" style="left:562.00px;top:198.60px;" width="10.4" height="8" viewBox="0 0 10.4 8"><path d="M0 0.6H10.2M0 2.6H10.2M0 4.6H10.2M0 6.6H10.2" stroke="#b4b4b4" stroke-width="0.8" fill="none"/></svg>
<div class="a" style="left:578.00px;top:196.40px;width:1.00px;height:14.00px;background:#dcdcdc;"></div>
<svg class="a" style="left:583.80px;top:198.60px;" width="10.4" height="8" viewBox="0 0 10.4 8"><path d="M0 0.6H4M5.4 0.6H9.4M0 2.6H4M5.4 2.6H9.4M0 4.6H4M5.4 4.6H9.4M0 6.6H4M5.4 6.6H9.4" stroke="#b4b4b4" stroke-width="0.8" fill="none"/></svg>
<svg class="a" style="left:597.40px;top:203.00px;" width="3.4" height="2.2" viewBox="0 0 3.4 2.2"><path d="M0 0h3.2l-1.6 2z" fill="#bcbcbc"/></svg>
<svg class="a" style="left:629.60px;top:170.60px;" width="10.6" height="11.2" viewBox="0 0 10.6 11.2"><g fill="none" stroke="#9c9c9c" stroke-width="0.9"><path d="M0.6 0.4v10.4M3.2 0.4v10.4"/><path d="M5.6 5l1.6-4.4h0.8l1.6 4.4M6.2 3.4h2.8" stroke-width="0.7"/><path d="M7.6 6v4.6M6.2 9.2l1.4 1.6l1.4-1.6" stroke="#c7a7c1" stroke-width="0.8"/></g></svg>
<div class="t" style="left:642.90px;top:172.27px;font-size:8.30px;color:#a9a9a9;letter-spacing:-0.093px;">Направление текста</div>
<svg class="a" style="left:722.40px;top:176.20px;" width="3.4" height="2.2" viewBox="0 0 3.4 2.2"><path d="M0 0h3.2l-1.6 2z" fill="#bcbcbc"/></svg>
<svg class="a" style="left:629.40px;top:186.40px;" width="11.6" height="11.2" viewBox="0 0 11.6 11.2"><g fill="none" stroke="#b9a9b7" stroke-width="0.8"><rect x="0.4" y="0.4" width="10.6" height="10.2" stroke-dasharray="1.4 1"/><path d="M2.6 4.4h6.4M2.6 6.6h6.4" stroke="#9c9c9c"/><path d="M5.8 0.8v2.6M4.8 1.8l1-1l1 1M5.8 10.2v-2.6M4.8 9.2l1 1l1-1" stroke="#9c9c9c" stroke-width="0.7"/></g></svg>
<div class="t" style="left:642.90px;top:188.17px;font-size:8.30px;color:#a9a9a9;letter-spacing:-0.111px;">Выровнять текст</div>
<svg class="a" style="left:708.60px;top:192.00px;" width="3.4" height="2.2" viewBox="0 0 3.4 2.2"><path d="M0 0h3.2l-1.6 2z" fill="#bcbcbc"/></svg>
<svg class="a" style="left:629.40px;top:202.60px;" width="11.6" height="10.6" viewBox="0 0 11.6 10.6"><g fill="none"><path d="M0.4 0.6h6l1.2 2.2h-6z" fill="#a9a9a9"/><path d="M2.2 3.8v3.6h2" stroke="#c7a7c1" stroke-width="0.8"/><rect x="4.8" y="4.2" width="6.2" height="5.8" stroke="#b9a9b7" stroke-width="0.8"/><path d="M6.2 6.2h3.4M6.2 8h3.4" stroke="#b9b9b9" stroke-width="0.7"/></g></svg>
<div class="t" style="left:642.90px;top:204.17px;font-size:8.30px;color:#a9a9a9;letter-spacing:-0.042px;">Преобразовать в SmartArt</div>
<svg class="a" style="left:745.00px;top:208.20px;" width="3.4" height="2.2" viewBox="0 0 3.4 2.2"><path d="M0 0h3.2l-1.6 2z" fill="#bcbcbc"/></svg>
<div class="t" style="left:616.60px;top:220.07px;font-size:8.30px;color:#3a3a3a;letter-spacing:-0.346px;">Абзац</div>
<svg class="a" style="left:748.20px;top:222.80px;" width="5" height="5" viewBox="0 0 5 5"><g fill="none" stroke="#8c8c8c" stroke-width="0.8"><path d="M0.4 3.2v-2.8h2.8"/><path d="M2 2l2.4 2.4M4.5 2.6v1.9h-1.9"/></g></svg>
<div class="a" style="left:756.60px;top:169.50px;width:1.00px;height:57.50px;background:#d8d8d8;"></div>
<div class="a" style="left:760.20px;top:170.10px;width:95.60px;height:42.90px;background:#fff;border:1px solid #c6c6c6"></div>
<div class="a" style="left:846.00px;top:170.60px;width:9.30px;height:14.00px;background:#e9e9e9;"></div>
<div class="a" style="left:846.00px;top:170.10px;width:1.00px;height:42.90px;background:#c6c6c6;"></div>
<div class="a" style="left:846.00px;top:184.40px;width:9.80px;height:1.00px;background:#c6c6c6;"></div>
<div class="a" style="left:846.00px;top:198.40px;width:9.80px;height:1.00px;background:#c6c6c6;"></div>
<svg class="a" style="left:849.40px;top:176.40px;" width="3.4" height="2.2" viewBox="0 0 3.4 2.2"><path d="M0 2h3.2l-1.6-2z" fill="#c9c9c9"/></svg>
<svg class="a" style="left:849.20px;top:191.00px;" width="3.4" height="2.2" viewBox="0 0 3.4 2.2"><path d="M0 0h3.2l-1.6 2z" fill="#555"/></svg>
<svg class="a" style="left:848.80px;top:203.40px;" width="4.4" height="5" viewBox="0 0 4.4 5"><path d="M0 0.4h4.2" stroke="#555" stroke-width="0.8"/><path d="M0 2h4.2l-2.1 2.6z" fill="#555"/></svg>
<svg class="a" style="left:761.80px;top:172.40px;" width="11" height="10" viewBox="0 0 11 10"><g fill="none" stroke="#4c4c4c" stroke-width="0.78"><rect x="0.5" y="1" width="10" height="8"/><path d="M2 3.4h2.6M5.4 3.4h3.6M2 5.2h7M2 7h7" stroke-width="0.6"/><path d="M1.8 4.2l1-2.4l1 2.4" stroke="#2e5fb0" stroke-width="0.7"/></g></svg>
<svg class="a" style="left:776.30px;top:172.40px;" width="11" height="10" viewBox="0 0 11 10"><g fill="none" stroke="#4c4c4c" stroke-width="0.78"><path d="M1 0.6l9 8.8"/></g></svg>
<svg class="a" style="left:790.40px;top:172.40px;" width="11" height="10" viewBox="0 0 11 10"><g fill="none" stroke="#4c4c4c" stroke-width="0.78"><path d="M0.6 0.6l9.6 8.6M10.2 6v3.2h-3.4"/></g></svg>
<svg class="a" style="left:803.60px;top:172.40px;" width="11" height="10" viewBox="0 0 11 10"><g fill="none" stroke="#4c4c4c" stroke-width="0.78"><rect x="0.4" y="1.2" width="10.2" height="7.6"/></g></svg>
<svg class="a" style="left:817.50px;top:172.40px;" width="11" height="10" viewBox="0 0 11 10"><g fill="none" stroke="#4c4c4c" stroke-width="0.78"><ellipse cx="5.5" cy="5" rx="5" ry="3.8"/></g></svg>
<svg class="a" style="left:831.60px;top:172.40px;" width="11" height="10" viewBox="0 0 11 10"><g fill="none" stroke="#4c4c4c" stroke-width="0.78"><rect x="0.4" y="1.2" width="10.2" height="7.6" rx="1.8"/></g></svg>
<svg class="a" style="left:761.80px;top:186.70px;" width="11" height="10" viewBox="0 0 11 10"><g fill="none" stroke="#4c4c4c" stroke-width="0.78"><path d="M5.2 0.8l4.4 8.6h-8.8z"/></g></svg>
<svg class="a" style="left:776.30px;top:186.70px;" width="11" height="10" viewBox="0 0 11 10"><g fill="none" stroke="#4c4c4c" stroke-width="0.78"><path d="M0.4 1h4.6v8h5.2"/></g></svg>
<svg class="a" style="left:790.40px;top:186.70px;" width="11" height="10" viewBox="0 0 11 10"><g fill="none" stroke="#4c4c4c" stroke-width="0.78"><path d="M0.2 1h4.4v6.4h5.2M7.8 5.4l2.2 2l-2.2 2"/></g></svg>
<svg class="a" style="left:803.60px;top:186.70px;" width="11" height="10" viewBox="0 0 11 10"><g fill="none" stroke="#4c4c4c" stroke-width="0.78"><path d="M0.6 3.2h5v-2.4l4.8 4.2l-4.8 4.2v-2.4h-5z"/></g></svg>
<svg class="a" style="left:817.50px;top:186.70px;" width="11" height="10" viewBox="0 0 11 10"><g fill="none" stroke="#4c4c4c" stroke-width="0.78"><path d="M3.2 0.6h4.6v4.6h2.4l-4.7 4.4l-4.7-4.4h2.4z"/></g></svg>
<svg class="a" style="left:831.60px;top:186.70px;" width="11" height="10" viewBox="0 0 11 10"><g fill="none" stroke="#4c4c4c" stroke-width="0.78"><path d="M0.6 9.2v-6.4l2.6-2.2h5c-1 1.6-1 2.2 0.4 2.6c1.6 0.4 2 1.6 2 2.6v3.4z"/></g></svg>
<svg class="a" style="left:761.80px;top:200.80px;" width="11" height="10" viewBox="0 0 11 10"><g fill="none" stroke="#4c4c4c" stroke-width="0.78"><path d="M3.4 0.6c-2 1.6-2.4 3.4-0.2 3.6c2.6 0.2 3.6 1.6 1.4 3.4l1.8 1.8M4.6 5.8v1.8l2 0.2"/></g></svg>
<svg class="a" style="left:776.30px;top:200.80px;" width="11" height="10" viewBox="0 0 11 10"><g fill="none" stroke="#4c4c4c" stroke-width="0.78"><path d="M0.4 1.4c5 0 9 2.4 9.6 8"/></g></svg>
<svg class="a" style="left:790.40px;top:200.80px;" width="11" height="10" viewBox="0 0 11 10"><g fill="none" stroke="#4c4c4c" stroke-width="0.78"><path d="M0.200 8.800c2.600-0.600 2.200-8 4.600-8s2.200 7.600 5.600 8.200"/></g></svg>
<svg class="a" style="left:803.60px;top:200.80px;" width="11" height="10" viewBox="0 0 11 10"><g fill="none" stroke="#4c4c4c" stroke-width="0.78"><path d="M7 0.500c-1.700 0-2.100 0.700-2.100 1.900v1.300c0 0.900-0.500 1.300-1.500 1.300c1 0 1.500 0.400 1.500 1.300v1.300c0 1.200 0.400 1.900 2.100 1.900"/></g></svg>
<svg class="a" style="left:817.50px;top:200.80px;" width="11" height="10" viewBox="0 0 11 10"><g fill="none" stroke="#4c4c4c" stroke-width="0.78"><path d="M4 0.500c1.700 0 2.100 0.700 2.100 1.900v1.300c0 0.900 0.500 1.300 1.500 1.300c-1 0-1.500 0.400-1.500 1.300v1.300c0 1.200-0.400 1.900-2.100 1.900"/></g></svg>
<svg class="a" style="left:831.60px;top:200.80px;" width="11" height="10" viewBox="0 0 11 10"><g fill="none" stroke="#4c4c4c" stroke-width="0.78"><path d="M5.5 0.6l1.5 3.2l3.5 0.4l-2.6 2.4l0.7 3.4l-3.1-1.8l-3.1 1.8l0.7-3.4l-2.6-2.4l3.5-0.4z"/></g></svg>
<svg class="a" style="left:874.00px;top:171.00px;" width="19.4" height="19" viewBox="0 0 19.4 19"><rect x="3.6" y="3.2" width="11.6" height="12" fill="#f0c16f"/><rect x="0.5" y="0.5" width="7.4" height="7.4" fill="#fff" stroke="#7a7a7a" stroke-width="0.9"/><rect x="11" y="10.8" width="7.6" height="7.4" fill="#fff" stroke="#7a7a7a" stroke-width="0.9"/></svg>
<div class="t" style="left:859.20px;top:195.97px;font-size:8.30px;color:#262626;letter-spacing:0.021px;">Упорядочить</div>
<svg class="a" style="left:883.00px;top:209.60px;" width="3.4" height="2.2" viewBox="0 0 3.4 2.2"><path d="M0 0h3.2l-1.6 2z" fill="#6a6a6a"/></svg>
<svg class="a" style="left:922.60px;top:171.60px;" width="21.4" height="21" viewBox="0 0 21.4 21"><g fill="none"><path d="M4 0.8h11.6c2 0 3.2 1.2 3.2 3.2v8c0 4-2 6-6 6h-8.800c-2 0-3.2-1.200-3.200-3.200v-10.800c0-2 1.200-3.200 3.200-3.200z" fill="#f0e9ef" stroke="#d9cfd8" stroke-width="0.9"/><path d="M20.600 4.800l-6.400 9.200l-2.600 1.800l0.800-3z" fill="#b5b5b5"/><path d="M11.400 15.800c-1 1.600-2.200 2.600-4 2.800c1-0.600 1.400-1.600 1.600-3z" fill="#b5b5b5"/></g></svg>
<div class="t" style="left:913.00px;top:195.97px;font-size:8.30px;color:#a9a9a9;letter-spacing:-0.041px;">Экспресс-</div>
<div class="t" style="left:919.00px;top:206.67px;font-size:8.30px;color:#a9a9a9;letter-spacing:-0.217px;">стили</div>
<svg class="a" style="left:943.00px;top:210.40px;" width="3.4" height="2.2" viewBox="0 0 3.4 2.2"><path d="M0 0h3.2l-1.6 2z" fill="#bcbcbc"/></svg>
<svg class="a" style="left:956.00px;top:170.60px;" width="11.6" height="11.6" viewBox="0 0 11.6 11.6"><g fill="none" stroke="#a9a9a9" stroke-width="0.8"><path d="M3.600 3.200l3.400-2.600l3.800 4.600l-4 3.200c-1.200 0-2.600-1.800-3.200-5.200z"/><path d="M3.800 3.400c-1.400-0.600-2-1.800-1.400-2.800"/></g><rect x="0" y="9.600" width="11.200" height="2" fill="#e9e2e8"/></svg>
<div class="t" style="left:969.70px;top:172.27px;font-size:8.30px;color:#a9a9a9;letter-spacing:-0.037px;">Заливка фигуры</div>
<svg class="a" style="left:1035.00px;top:176.20px;" width="3.4" height="2.2" viewBox="0 0 3.4 2.2"><path d="M0 0h3.2l-1.6 2z" fill="#bcbcbc"/></svg>
<svg class="a" style="left:956.00px;top:186.60px;" width="11.6" height="11" viewBox="0 0 11.6 11"><g fill="none" stroke="#a9a9a9" stroke-width="0.8"><path d="M7 1.200h-6.400v8h9v-3.400"/><path d="M9.800 0.600l1.200 1.200l-5.200 5.400l-1.800 0.600l0.600-1.800z" fill="#bdbdbd"/></g></svg>
<div class="t" style="left:969.70px;top:188.17px;font-size:8.30px;color:#a9a9a9;letter-spacing:0.047px;">Контур фигуры</div>
<svg class="a" style="left:1030.60px;top:192.00px;" width="3.4" height="2.2" viewBox="0 0 3.4 2.2"><path d="M0 0h3.2l-1.6 2z" fill="#bcbcbc"/></svg>
<svg class="a" style="left:956.00px;top:202.80px;" width="11.6" height="10.4" viewBox="0 0 11.6 10.4"><g><path d="M2.600 8.800h6.200c1.200-1.200 2-3.200 2-5.400l-1-1.200l-6.400 1z" fill="#c9c9c9"/><rect x="0.500" y="1" width="8.600" height="6.600" rx="1.600" fill="#fff" stroke="#a9a9a9" stroke-width="0.9"/></g></svg>
<div class="t" style="left:969.70px;top:204.17px;font-size:8.30px;color:#a9a9a9;letter-spacing:-0.221px;">Эффекты фигуры</div>
<svg class="a" style="left:1038.80px;top:208.20px;" width="3.4" height="2.2" viewBox="0 0 3.4 2.2"><path d="M0 0h3.2l-1.6 2z" fill="#bcbcbc"/></svg>
<div class="t" style="left:878.20px;top:220.07px;font-size:8.30px;color:#3a3a3a;letter-spacing:-0.338px;">Рисование</div>
<svg class="a" style="left:1042.40px;top:222.80px;" width="5" height="5" viewBox="0 0 5 5"><g fill="none" stroke="#8c8c8c" stroke-width="0.8"><path d="M0.4 3.2v-2.8h2.8"/><path d="M2 2l2.4 2.4M4.5 2.6v1.9h-1.9"/></g></svg>
<div class="a" style="left:1050.60px;top:169.50px;width:1.00px;height:57.50px;background:#d8d8d8;"></div>
<svg class="a" style="left:1056.20px;top:171.60px;" width="9.8" height="9.8" viewBox="0 0 9.8 9.8"><g fill="none" stroke="#2e6fb5"><circle cx="6" cy="3.600" r="3" stroke-width="1.100"/><path d="M3.800 5.800l-3.400 3.400" stroke-width="1.500"/></g></svg>
<div class="t" style="left:1069.90px;top:172.27px;font-size:8.30px;color:#262626;letter-spacing:-0.396px;">Найти</div>
<div class="t" style="left:1056.00px;top:186.78px;font-size:6.40px;color:#7a4aa0;">ab</div>
<div class="t" style="left:1059.60px;top:191.98px;font-size:6.40px;color:#2e6fb5;">ac</div>
<svg class="a" style="left:1056.20px;top:193.60px;" width="3.6" height="3.6" viewBox="0 0 3.6 3.6"><path d="M0.400 0.400v2.400h2.400M1.600 1.600l1.200 1.200l-1.200 0.800" fill="none" stroke="#2e6fb5" stroke-width="0.700"/></svg>
<div class="t" style="left:1069.40px;top:188.17px;font-size:8.30px;color:#262626;letter-spacing:-0.157px;">Заменить</div>
<svg class="a" style="left:1113.20px;top:192.00px;" width="3.4" height="2.2" viewBox="0 0 3.4 2.2"><path d="M0 0h3.2l-1.6 2z" fill="#6a6a6a"/></svg>
<svg class="a" style="left:1058.20px;top:202.60px;" width="7.2" height="10.4" viewBox="0 0 7.2 10.4"><path d="M0.600 0.600v7.800l2-1.800l1.400 3.200l1.200-0.600l-1.400-3h2.600z" fill="#fff" stroke="#4c4c4c" stroke-width="0.800"/></svg>
<div class="t" style="left:1069.90px;top:204.17px;font-size:8.30px;color:#262626;letter-spacing:-0.370px;">Выделить</div>
<svg class="a" style="left:1108.00px;top:208.20px;" width="3.4" height="2.2" viewBox="0 0 3.4 2.2"><path d="M0 0h3.2l-1.6 2z" fill="#6a6a6a"/></svg>
<div class="t" style="left:1056.00px;top:220.07px;font-size:8.30px;color:#3a3a3a;letter-spacing:-0.164px;">Редактирование</div>
<div class="a" style="left:1123.20px;top:169.50px;width:1.00px;height:57.50px;background:#d8d8d8;"></div>
<svg class="a" style="left:1417.60px;top:222.40px;" width="5.6" height="3.6" viewBox="0 0 5.6 3.6"><path d="M0.400 3.200l2.400-2.600l2.400 2.600" fill="none" stroke="#555" stroke-width="0.900"/></svg>
<!-- s_work -->
<div class="a" style="left:250.40px;top:232.40px;width:10.20px;height:598.60px;background:#dcdadb;"></div>
<div class="a" style="left:250.40px;top:232.40px;width:10.20px;height:10.00px;background:#fff;border:1px solid #c9c9c9"></div>
<svg class="a" style="left:253.60px;top:236.20px;" width="3.8" height="2.4" viewBox="0 0 3.8 2.4"><path d="M0 2.400h3.800l-1.900-2.400z" fill="#666"/></svg>
<div class="a" style="left:250.40px;top:242.20px;width:10.20px;height:61.40px;background:#fff;border:1px solid #c9c9c9"></div>
<div class="a" style="left:250.40px;top:820.60px;width:10.20px;height:10.20px;background:#fff;border:1px solid #c9c9c9"></div>
<svg class="a" style="left:253.60px;top:824.60px;" width="3.8" height="2.4" viewBox="0 0 3.8 2.4"><path d="M0 0h3.800l-1.900 2.400z" fill="#666"/></svg>
<div class="a" style="left:264.00px;top:231.00px;width:1.00px;height:601.00px;background:#f0f0f0;"></div>
<div class="a" style="left:1421.20px;top:232.40px;width:7.80px;height:525.40px;background:#dcdadb;"></div>
<div class="a" style="left:1421.20px;top:232.40px;width:7.80px;height:9.80px;background:#fff;border:1px solid #c9c9c9;border-right:none"></div>
<svg class="a" style="left:1423.40px;top:236.20px;" width="3.8" height="2.4" viewBox="0 0 3.8 2.4"><path d="M0 2.400h3.800l-1.900-2.400z" fill="#666"/></svg>
<div class="a" style="left:1421.20px;top:242.20px;width:7.80px;height:12.20px;background:#fff;border:1px solid #c9c9c9;border-right:none"></div>
<div class="a" style="left:1421.20px;top:748.80px;width:7.80px;height:9.00px;background:#fff;"></div>
<svg class="a" style="left:1423.40px;top:752.40px;" width="3.8" height="2.4" viewBox="0 0 3.8 2.4"><path d="M0 0h3.800l-1.900 2.400z" fill="#666"/></svg>
<svg class="a" style="left:1422.80px;top:763.00px;" width="5" height="5.4" viewBox="0 0 5 5.4"><path d="M0.200 2.600h4.600l-2.300-2.400zM0.200 5.200h4.600l-2.300-2.400z" fill="#666"/><path d="M0 2.800h5" stroke="#666" stroke-width="0.500"/></svg>
<svg class="a" style="left:1422.80px;top:774.80px;" width="5" height="5.4" viewBox="0 0 5 5.4"><path d="M0.200 0.200h4.600l-2.300 2.400zM0.200 2.800h4.600l-2.300 2.400z" fill="#666"/><path d="M0 2.600h5" stroke="#666" stroke-width="0.500"/></svg>
<div class="a" style="left:364.00px;top:243.00px;width:958.40px;height:540.00px;background:#5b595c;"></div>
<div class="a" style="left:399.80px;top:279.20px;width:887.60px;height:467.60px;background:#fff;box-shadow:0 0 3px rgba(0,0,0,0.35)"></div>
<div class="a" style="left:412.00px;top:291.60px;width:862.40px;height:443.00px;background:transparent;border:1px solid #777"></div>
<div class="a" style="left:265.00px;top:798.00px;width:1164.00px;height:1.00px;background:#c4c4c4;"></div>
<div class="t" style="left:272.60px;top:805.17px;font-size:10.20px;color:#505050;letter-spacing:-0.021px;">Щелкните, чтобы добавить заметки</div>
<!-- s_slide -->
<div class="a" style="left:768.00px;top:278.40px;width:151.00px;height:57.40px;background:#98a8ab;"></div>
<div class="a" style="left:776.60px;top:279.00px;width:134.20px;height:50.60px;background:transparent;border:0.8px solid #d6e0e0;border-top:none"></div>
<svg class="a" style="left:430.00px;top:322.00px;" width="260" height="102" viewBox="430 322 260 102"><g>
<path d="M436.800 415.400C466 411 486 402 500.500 386.200L481 415.400Z" fill="#fff" stroke="#c9c9c9" stroke-width="0.700"/>
<path d="M517.500 361.900C515.500 382 512.500 400 510.200 415.400H489.100C497 402 503 390 506.400 378.900Z" fill="#3d5aa9"/>
<path d="M523.800 332.500L524.400 415.400H516.300C519.500 392 522 360 523.800 332.500Z" fill="#da1a22"/>
<path d="M533.300 330.500V415.400" stroke="#bdbdbd" stroke-width="0.800"/>
<rect x="542.400" y="330.500" width="7.700" height="52.300" fill="#da1a22"/>
<ellipse cx="579.450" cy="356.850" rx="18.350" ry="23.250" fill="none" stroke="#da1a22" stroke-width="6.800"/>
<path d="M650 334.050H616.900V356.500" fill="none" stroke="#da1a22" stroke-width="6.900"/>
<path d="M616.900 358.800C620.500 353.400 626.500 350.400 633 350.400C641.600 350.400 648.200 357 648.200 365.300C648.200 373.600 641.400 380.100 632.400 380.100C624 380.100 617.400 376.800 613.600 371.600" fill="none" stroke="#da1a22" stroke-width="6.800"/>
</g></svg>
<div class="t" style="left:467.00px;top:410.28px;font-size:4.20px;color:#b0b0b0;font-family:'Liberation Serif',serif;letter-spacing:1.000px;">1919</div>
<div class="t" style="left:536.1px;top:341.1px;font-size:5.2px;font-weight:bold;color:#da1a22;transform:rotate(-90deg);transform-origin:center;width:8px;text-align:center;letter-spacing:0.25px">ЛЕТ</div>
<div class="t" style="left:542.40px;top:388.76px;font-size:9.50px;color:#1c6a73;font-weight:bold;transform:scaleX(0.9246);transform-origin:0 0;">ФИНАНСОВЫЙ УНИВЕРСИТЕТ</div>
<div class="t" style="left:542.40px;top:398.96px;font-size:9.50px;color:#1c6a73;transform:scaleX(0.9137);transform-origin:0 0;">ПРИ ПРАВИТЕЛЬСТВЕ</div>
<div class="t" style="left:542.40px;top:407.96px;font-size:9.50px;color:#1c6a73;transform:scaleX(0.9211);transform-origin:0 0;">РОССИЙСКОЙ ФЕДЕРАЦИИ</div>
<div class="t" style="left:523.60px;top:494.62px;font-size:27.20px;color:#1ba3e2;font-family:'Liberation Serif',serif;font-weight:bold;transform:scaleX(1.0373);transform-origin:0 0;">Тема:</div>
<div class="t" style="left:611.00px;top:465.93px;font-size:25.40px;color:#0f6bb4;font-family:'Liberation Serif',serif;letter-spacing:0.445px;font-weight:bold;transform:scaleX(1.0600);transform-origin:0 0;">Отраслевые особенности топливно-</div>
<div class="t" style="left:611.00px;top:499.83px;font-size:25.40px;color:#0f6bb4;font-family:'Liberation Serif',serif;letter-spacing:0.444px;font-weight:bold;transform:scaleX(1.0600);transform-origin:0 0;">энергетического комплекса: состояние и точки</div>
<div class="t" style="left:611.00px;top:533.53px;font-size:25.40px;color:#0f6bb4;font-family:'Liberation Serif',serif;letter-spacing:0.686px;font-weight:bold;transform:scaleX(1.0600);transform-origin:0 0;">роста»</div>
<div class="t" style="left:836.60px;top:611.71px;font-size:13.60px;color:#1a6aae;font-family:'Liberation Serif',serif;letter-spacing:1.000px;font-weight:bold;">Профессор Шаркова Антонина Васильевна</div>
<div class="t" style="left:835.00px;top:630.61px;font-size:13.60px;color:#1a6aae;font-family:'Liberation Serif',serif;letter-spacing:1.007px;font-weight:bold;white-space:pre;">Заведующий кафедрой  отраслевых рынков</div>
<div class="t" style="left:875.30px;top:650.01px;font-size:13.60px;color:#1a6aae;font-family:'Liberation Serif',serif;letter-spacing:0.999px;font-weight:bold;">факультет Экономики и бизнеса</div>
<div class="t" style="left:765.80px;top:689.91px;font-size:13.60px;color:#1a6aae;font-family:'Liberation Serif',serif;letter-spacing:0.970px;font-weight:bold;">Москва 18.03 2024</div>
<!-- s_thumbs -->
<div class="a" style="left:113.80px;top:241.10px;width:125.50px;height:73.60px;background:#e9623c;"></div>
<div class="a" style="left:116.80px;top:244.20px;width:119.60px;height:67.40px;background:#5b595c;"></div>
<div class="a" style="left:121.80px;top:249.80px;width:109.80px;height:56.30px;background:#fff;"></div>
<div class="a" style="left:123.60px;top:251.60px;width:106.10px;height:53.20px;background:transparent;border:0.6px solid #777"></div>
<div class="a" style="left:168.80px;top:249.60px;width:16.30px;height:5.30px;background:#98a8ab;"></div>
<div class="t" style="left:100.00px;top:241.76px;font-size:10.80px;color:#d24a2c;">1</div>
<svg class="a" style="left:99.00px;top:255.40px;" width="6.4" height="6" viewBox="0 0 6.4 6"><path d="M3.200 0.200l0.900 2h2.100l-1.700 1.400l0.700 2.200l-2-1.300l-2 1.300l0.700-2.200l-1.700-1.400h2.100z" fill="#555"/></svg>
<svg class="a" style="left:132.00px;top:254.00px;" width="24" height="13" viewBox="0 0 24 13"><path d="M0.600 11.400l3.600-4.400l-0.600 4.400z" fill="#3d5aa9"/><path d="M5.600 1.400l0.300 10h-1.400z" fill="#da1a22"/><g fill="none" stroke="#da1a22" stroke-width="1"><path d="M8 1.400v6.600"/><ellipse cx="12.200" cy="4.700" rx="2.500" ry="3.100"/><path d="M20.800 1.900h-3.800v2.800c3-1.400 4.600 0.200 4.400 1.800c-0.300 1.700-2.800 2.100-4.600 0.600"/></g><path d="M7.600 9.600h9M7.600 10.800h6.600" stroke="#1c6a73" stroke-width="0.500" opacity="0.700"/></svg>
<div class="t" style="left:137.00px;top:275.55px;font-size:3.40px;color:#1fb0e2;font-family:'Liberation Serif',serif;transform:scaleX(1.0947);transform-origin:0 0;">Тема:</div>
<div class="t" style="left:148.20px;top:272.17px;font-size:3.50px;color:#0f6bb4;font-family:'Liberation Serif',serif;font-weight:bold;transform:scaleX(0.9806);transform-origin:0 0;">Отраслевые особенности топливно-</div>
<div class="t" style="left:148.20px;top:276.37px;font-size:3.50px;color:#0f6bb4;font-family:'Liberation Serif',serif;font-weight:bold;transform:scaleX(0.9756);transform-origin:0 0;">энергетического комплекса: состояние и точки</div>
<div class="t" style="left:148.20px;top:280.57px;font-size:3.50px;color:#0f6bb4;font-family:'Liberation Serif',serif;font-weight:bold;transform:scaleX(0.9132);transform-origin:0 0;">роста»</div>
<div class="t" style="left:175.30px;top:289.81px;font-size:1.90px;color:#4a8cc4;font-family:'Liberation Serif',serif;font-weight:bold;transform:scaleX(1.0073);transform-origin:0 0;">Профессор Шаркова Антонина Васильевна</div>
<div class="t" style="left:175.10px;top:292.41px;font-size:1.90px;color:#4a8cc4;font-family:'Liberation Serif',serif;font-weight:bold;transform:scaleX(1.0235);transform-origin:0 0;">Заведующий кафедрой отраслевых рынков</div>
<div class="t" style="left:180.20px;top:295.01px;font-size:1.90px;color:#4a8cc4;font-family:'Liberation Serif',serif;font-weight:bold;transform:scaleX(1.0092);transform-origin:0 0;">факультет Экономики и бизнеса</div>
<div class="t" style="left:166.60px;top:299.51px;font-size:1.90px;color:#4a8cc4;font-family:'Liberation Serif',serif;font-weight:bold;transform:scaleX(1.0283);transform-origin:0 0;">Москва 18.03 2024</div>
<div class="a" style="left:116.20px;top:325.50px;width:120.60px;height:68.00px;background:#fff;outline:1px solid #dedede"></div>
<div class="a" style="left:119.90px;top:329.60px;width:113.20px;height:60.30px;background:#e9e9ea;border:1px solid #4a4a4a"></div>
<div class="t" style="left:100.00px;top:323.96px;font-size:10.80px;color:#444;">2</div>
<div class="a" style="left:201.70px;top:330.20px;width:30.70px;height:55.20px;overflow:hidden;background:#4a4e48"><svg class="a" style="left:-2px;top:-2px;filter:blur(0.9px)" width="34.70" height="59.20" viewBox="-2 -2 34.70 59.20"><g transform="scale(1.0233 0.9857)"><rect x="-3" y="-3" width="36" height="62" fill="#62645a"/>
<ellipse cx="8" cy="4" rx="9" ry="3" fill="#5a5f63"/><ellipse cx="22" cy="9" rx="9" ry="3.500" fill="#8a7450" opacity="0.800"/><ellipse cx="7" cy="13" rx="8" ry="3" fill="#86704c" opacity="0.800"/><ellipse cx="20" cy="16" rx="10" ry="2.600" fill="#4e6068" opacity="0.900"/><ellipse cx="14" cy="7" rx="4" ry="1.600" fill="#9a7a4a" opacity="0.700"/>
<path d="M-2 18.500l17 4.500v3l-17-2z" fill="#b9cadb"/><path d="M-2 23.500l12 2v3.500l-12-1z" fill="#8fa3b8"/>
<path d="M16 21.500l15-2.500v8.500h-17z" fill="#2c59a8"/><path d="M20 19.500h5v1.600h-5z" fill="#dfe6ee"/>
<path d="M12 27l19 0.500v6l-16-1z" fill="#6e6634"/>
<path d="M-2 27h7v9h-7z" fill="#17222e"/><path d="M16 33h15v9h-15z" fill="#2b3230"/>
<path d="M5 29h10.500v7h-10.500z" fill="#e6e1c2"/><path d="M13.600 26h2.400v9h-2.400z" fill="#dcb8a2"/>
<path d="M1 35l18 1v5.500l-18-1.500z" fill="#d6d4c4"/><path d="M14 38h7v3.500h-7z" fill="#ece6cf"/><path d="M24 34h5v4h-5z" fill="#e6e7e0"/>
<path d="M-2 41l8 0.500l2 5h-10z" fill="#2a7cc9"/><ellipse cx="22.500" cy="45" rx="9" ry="3.600" fill="#1b6cca"/><ellipse cx="26" cy="44" rx="3" ry="1" fill="#8a6a3a"/>
<path d="M-3 47.500c10-1.500 20 2 36 1v10h-36z" fill="#26261f"/><path d="M6 43h8v4h-8z" fill="#3a4a4a"/></g></svg></div>
<div class="t" style="left:150.00px;top:333.99px;font-size:3.60px;color:#333;font-family:'Liberation Serif',serif;transform:scaleX(1.3492);transform-origin:0 0;">Содержание:</div>
<div class="t" style="left:137.20px;top:339.99px;font-size:3.60px;color:#222;font-family:'Liberation Serif',serif;font-weight:bold;transform:scaleX(1.1224);transform-origin:0 0;">1. Структура национальной</div>
<div class="t" style="left:142.00px;top:345.59px;font-size:3.60px;color:#222;font-family:'Liberation Serif',serif;font-weight:bold;transform:scaleX(0.9574);transform-origin:0 0;">экономики России.</div>
<div class="t" style="left:137.20px;top:351.59px;font-size:3.60px;color:#222;font-family:'Liberation Serif',serif;font-weight:bold;transform:scaleX(1.1185);transform-origin:0 0;">2. Характеристика комплекса,</div>
<div class="t" style="left:142.00px;top:357.59px;font-size:3.60px;color:#222;font-family:'Liberation Serif',serif;font-weight:bold;transform:scaleX(1.1112);transform-origin:0 0;">тенденций и проблемы развития</div>
<div class="t" style="left:142.00px;top:363.19px;font-size:3.60px;color:#222;font-family:'Liberation Serif',serif;font-weight:bold;transform:scaleX(1.1270);transform-origin:0 0;">ТЭК</div>
<div class="a" style="left:116.20px;top:407.10px;width:120.60px;height:68.00px;background:#fff;outline:1px solid #dedede"></div>
<div class="a" style="left:119.90px;top:411.20px;width:113.20px;height:60.30px;background:#e9e9ea;border:1px solid #4a4a4a"></div>
<div class="t" style="left:100.00px;top:405.56px;font-size:10.80px;color:#444;">3</div>
<div class="t" style="left:166.60px;top:415.72px;font-size:3.80px;color:#0f6bb4;font-family:'Liberation Serif',serif;font-weight:bold;transform:scaleX(1.3501);transform-origin:0 0;">1 вопрос</div>
<div class="t" style="left:131.90px;top:421.62px;font-size:3.80px;color:#0f6bb4;font-family:'Liberation Serif',serif;font-weight:bold;transform:scaleX(1.3640);transform-origin:0 0;">«Структура национальной экономики</div>
<div class="t" style="left:166.60px;top:426.82px;font-size:3.80px;color:#0f6bb4;font-family:'Liberation Serif',serif;font-weight:bold;transform:scaleX(1.4370);transform-origin:0 0;">России»</div>
<div class="a" style="left:116.20px;top:488.70px;width:120.60px;height:68.00px;background:#fff;outline:1px solid #dedede"></div>
<div class="a" style="left:119.90px;top:492.80px;width:113.20px;height:60.30px;background:#e9e9ea;border:1px solid #4a4a4a"></div>
<div class="t" style="left:100.00px;top:487.16px;font-size:10.80px;color:#444;">4</div>
<div class="t" style="left:130.00px;top:500.80px;font-size:3.10px;color:#1c2a5a;font-family:'Liberation Serif',serif;font-weight:bold;transform:scaleX(1.0985);transform-origin:0 0;">Динамика ключевых показателей национальной экономики</div>
<div class="t" style="left:127.80px;top:509.74px;font-size:2.70px;color:#1f62ac;font-family:'Liberation Serif',serif;font-weight:bold;transform:scaleX(0.8390);transform-origin:0 0;">• ВВП (%, к предыдущему году)</div>
<div class="t" style="left:127.80px;top:513.44px;font-size:2.70px;color:#1f62ac;font-family:'Liberation Serif',serif;font-weight:bold;transform:scaleX(0.8329);transform-origin:0 0;">• Инфляция (%, декабрь к декабрю предыдущего года)</div>
<div class="t" style="left:127.80px;top:517.14px;font-size:2.70px;color:#1f62ac;font-family:'Liberation Serif',serif;font-weight:bold;transform:scaleX(0.7961);transform-origin:0 0;">• Ключевая ставка (%, в среднем за год, с учетом капитализ)</div>
<div class="t" style="left:127.80px;top:520.84px;font-size:2.70px;color:#1f62ac;font-family:'Liberation Serif',serif;font-weight:bold;transform:scaleX(0.8380);transform-origin:0 0;">• Безработица (%, декабрь, без сезонной корректировки)</div>
<div class="t" style="left:127.80px;top:524.54px;font-size:2.70px;color:#1f62ac;font-family:'Liberation Serif',serif;font-weight:bold;transform:scaleX(0.8249);transform-origin:0 0;">• Номинальная заработная плата (% к предыдущему году)</div>
<div class="t" style="left:127.80px;top:528.84px;font-size:2.70px;color:#1f62ac;font-family:'Liberation Serif',serif;font-weight:bold;transform:scaleX(0.7998);transform-origin:0 0;">• Реальные располагаемые доходы населения (% от ВВП к предыдущему году)</div>
<div class="t" style="left:127.80px;top:532.34px;font-size:2.70px;color:#1f62ac;font-family:'Liberation Serif',serif;font-weight:bold;transform:scaleX(0.8343);transform-origin:0 0;">• Импорт товаров и услуг (млрд долларов США в год)</div>
<div class="t" style="left:127.80px;top:536.34px;font-size:2.70px;color:#1f62ac;font-family:'Liberation Serif',serif;font-weight:bold;transform:scaleX(0.8271);transform-origin:0 0;">• Экспорт товаров и услуг (млрд долларов США в год)</div>
<div class="t" style="left:127.80px;top:540.24px;font-size:2.70px;color:#1f62ac;font-family:'Liberation Serif',serif;font-weight:bold;transform:scaleX(0.8185);transform-origin:0 0;">• Курс доллара США к рублю (рублей за доллар США, среднее за год)</div>
<div class="t" style="left:127.80px;top:544.14px;font-size:2.70px;color:#1f62ac;font-family:'Liberation Serif',serif;font-weight:bold;transform:scaleX(0.8617);transform-origin:0 0;">• Цена на нефть марки Urals (доллары США за баррель, ФОБ как поставленная, в среднем</div>
<div class="t" style="left:130.00px;top:547.34px;font-size:2.70px;color:#1f62ac;font-family:'Liberation Serif',serif;font-weight:bold;transform:scaleX(0.7976);transform-origin:0 0;">за предыдущий)</div>
<div class="a" style="left:116.20px;top:570.30px;width:120.60px;height:68.00px;background:#fff;outline:1px solid #dedede"></div>
<div class="a" style="left:119.90px;top:574.40px;width:113.20px;height:60.30px;background:#e9e9ea;border:1px solid #4a4a4a"></div>
<div class="t" style="left:100.00px;top:568.86px;font-size:10.80px;color:#444;">5</div>
<div class="a" style="left:207.20px;top:577.00px;width:25.20px;height:52.60px;overflow:hidden;background:#4a4e48"><svg class="a" style="left:-2px;top:-2px;filter:blur(0.9px)" width="29.20" height="56.60" viewBox="-2 -2 29.20 56.60"><g transform="scale(0.8400 0.9393)"><rect x="-3" y="-3" width="36" height="62" fill="#62645a"/>
<ellipse cx="8" cy="4" rx="9" ry="3" fill="#5a5f63"/><ellipse cx="22" cy="9" rx="9" ry="3.500" fill="#8a7450" opacity="0.800"/><ellipse cx="7" cy="13" rx="8" ry="3" fill="#86704c" opacity="0.800"/><ellipse cx="20" cy="16" rx="10" ry="2.600" fill="#4e6068" opacity="0.900"/><ellipse cx="14" cy="7" rx="4" ry="1.600" fill="#9a7a4a" opacity="0.700"/>
<path d="M-2 18.500l17 4.500v3l-17-2z" fill="#b9cadb"/><path d="M-2 23.500l12 2v3.500l-12-1z" fill="#8fa3b8"/>
<path d="M16 21.500l15-2.500v8.500h-17z" fill="#2c59a8"/><path d="M20 19.500h5v1.600h-5z" fill="#dfe6ee"/>
<path d="M12 27l19 0.500v6l-16-1z" fill="#6e6634"/>
<path d="M-2 27h7v9h-7z" fill="#17222e"/><path d="M16 33h15v9h-15z" fill="#2b3230"/>
<path d="M5 29h10.500v7h-10.500z" fill="#e6e1c2"/><path d="M13.600 26h2.400v9h-2.400z" fill="#dcb8a2"/>
<path d="M1 35l18 1v5.500l-18-1.500z" fill="#d6d4c4"/><path d="M14 38h7v3.500h-7z" fill="#ece6cf"/><path d="M24 34h5v4h-5z" fill="#e6e7e0"/>
<path d="M-2 41l8 0.500l2 5h-10z" fill="#2a7cc9"/><ellipse cx="22.500" cy="45" rx="9" ry="3.600" fill="#1b6cca"/><ellipse cx="26" cy="44" rx="3" ry="1" fill="#8a6a3a"/>
<path d="M-3 47.500c10-1.500 20 2 36 1v10h-36z" fill="#26261f"/><path d="M6 43h8v4h-8z" fill="#3a4a4a"/></g></svg></div>
<div class="a" style="left:134.70px;top:588.00px;width:70.70px;height:16.70px;background:#fff;border:0.7px solid #b9c2c5;border-radius:1px"></div>
<div class="a" style="left:137.50px;top:582.50px;width:49.80px;height:10.20px;background:#c5ced1;border-radius:2px"></div>
<div class="t" style="left:140.60px;top:586.19px;font-size:3.00px;color:#222;font-family:'Liberation Serif',serif;font-weight:bold;transform:scaleX(1.0189);transform-origin:0 0;">Национальная экономика</div>
<div class="t" style="left:140.40px;top:594.69px;font-size:2.40px;color:#222;font-family:'Liberation Serif',serif;font-weight:bold;transform:scaleX(1.1009);transform-origin:0 0;">• основная система экономик, обеспечивающая</div>
<div class="t" style="left:143.00px;top:598.09px;font-size:2.40px;color:#222;font-family:'Liberation Serif',serif;font-weight:bold;transform:scaleX(1.1928);transform-origin:0 0;">воспроизводство потенциала и населения</div>
<div class="a" style="left:134.70px;top:613.40px;width:70.70px;height:12.90px;background:#fff;border:0.7px solid #b9c2c5;border-radius:1px"></div>
<div class="a" style="left:137.50px;top:607.50px;width:49.80px;height:10.70px;background:#c5ced1;border-radius:2px"></div>
<div class="t" style="left:140.60px;top:611.44px;font-size:3.00px;color:#222;font-family:'Liberation Serif',serif;font-weight:bold;transform:scaleX(1.0079);transform-origin:0 0;">Экономическая структура</div>
<div class="t" style="left:140.40px;top:620.19px;font-size:2.40px;color:#222;font-family:'Liberation Serif',serif;font-weight:bold;transform:scaleX(1.0805);transform-origin:0 0;">• многоотраслевая совокупность хозяйственных</div>
<div class="a" style="left:116.20px;top:651.90px;width:120.60px;height:68.00px;background:#fff;outline:1px solid #dedede"></div>
<div class="a" style="left:119.90px;top:656.00px;width:113.20px;height:60.30px;background:#e9e9ea;border:1px solid #4a4a4a"></div>
<div class="t" style="left:100.00px;top:650.56px;font-size:10.80px;color:#444;">6</div>
<div class="a" style="left:136.00px;top:655.80px;width:66.00px;height:4.80px;background:#e9e9ea;"></div>
<div class="t" style="left:137.80px;top:656.65px;font-size:4.00px;color:#333;font-family:'Liberation Serif',serif;font-weight:bold;transform:scaleX(1.3173);transform-origin:0 0;">Национальная экономика</div>
<div class="a" style="left:207.20px;top:659.70px;width:24.00px;height:53.90px;overflow:hidden;background:#4a4e48"><svg class="a" style="left:-2px;top:-2px;filter:blur(0.9px)" width="28.00" height="57.90" viewBox="-2 -2 28.00 57.90"><g transform="scale(0.8000 0.9625)"><rect x="-3" y="-3" width="36" height="62" fill="#62645a"/>
<ellipse cx="8" cy="4" rx="9" ry="3" fill="#5a5f63"/><ellipse cx="22" cy="9" rx="9" ry="3.500" fill="#8a7450" opacity="0.800"/><ellipse cx="7" cy="13" rx="8" ry="3" fill="#86704c" opacity="0.800"/><ellipse cx="20" cy="16" rx="10" ry="2.600" fill="#4e6068" opacity="0.900"/><ellipse cx="14" cy="7" rx="4" ry="1.600" fill="#9a7a4a" opacity="0.700"/>
<path d="M-2 18.500l17 4.500v3l-17-2z" fill="#b9cadb"/><path d="M-2 23.500l12 2v3.500l-12-1z" fill="#8fa3b8"/>
<path d="M16 21.500l15-2.500v8.500h-17z" fill="#2c59a8"/><path d="M20 19.500h5v1.600h-5z" fill="#dfe6ee"/>
<path d="M12 27l19 0.500v6l-16-1z" fill="#6e6634"/>
<path d="M-2 27h7v9h-7z" fill="#17222e"/><path d="M16 33h15v9h-15z" fill="#2b3230"/>
<path d="M5 29h10.500v7h-10.500z" fill="#e6e1c2"/><path d="M13.600 26h2.400v9h-2.400z" fill="#dcb8a2"/>
<path d="M1 35l18 1v5.500l-18-1.500z" fill="#d6d4c4"/><path d="M14 38h7v3.500h-7z" fill="#ece6cf"/><path d="M24 34h5v4h-5z" fill="#e6e7e0"/>
<path d="M-2 41l8 0.500l2 5h-10z" fill="#2a7cc9"/><ellipse cx="22.500" cy="45" rx="9" ry="3.600" fill="#1b6cca"/><ellipse cx="26" cy="44" rx="3" ry="1" fill="#8a6a3a"/>
<path d="M-3 47.500c10-1.500 20 2 36 1v10h-36z" fill="#26261f"/><path d="M6 43h8v4h-8z" fill="#3a4a4a"/></g></svg></div>
<div class="a" style="left:152.00px;top:665.30px;width:53.70px;height:11.90px;background:#eef0f1;border:0.7px solid #a9b4b7;border-radius:1.5px"></div>
<div class="a" style="left:134.70px;top:664.70px;width:17.90px;height:12.90px;background:#8fa2a6;border-radius:2px"></div>
<div class="t" style="left:138.60px;top:669.97px;font-size:2.60px;color:#2a7ac0;font-family:'Liberation Serif',serif;font-weight:bold;transform:scaleX(1.0134);transform-origin:0 0;">Отрасль</div>
<div class="t" style="left:154.60px;top:666.63px;font-size:2.00px;color:#2a7ac0;font-family:'Liberation Serif',serif;font-weight:bold;transform:scaleX(1.1963);transform-origin:0 0;">• совокупность предприятий и организаций,</div>
<div class="t" style="left:154.60px;top:669.53px;font-size:2.00px;color:#2a7ac0;font-family:'Liberation Serif',serif;font-weight:bold;transform:scaleX(1.2776);transform-origin:0 0;">производящих однородную продукцию</div>
<div class="t" style="left:154.60px;top:672.43px;font-size:2.00px;color:#2a7ac0;font-family:'Liberation Serif',serif;font-weight:bold;transform:scaleX(1.1964);transform-origin:0 0;">и выполняющих одинаковые функции</div>
<div class="a" style="left:152.00px;top:679.10px;width:53.70px;height:11.00px;background:#eef0f1;border:0.7px solid #a9b4b7;border-radius:1.5px"></div>
<div class="a" style="left:134.70px;top:678.50px;width:17.90px;height:12.00px;background:#8fa2a6;border-radius:2px"></div>
<div class="t" style="left:138.60px;top:683.32px;font-size:2.60px;color:#f4f4f4;font-family:'Liberation Serif',serif;font-weight:bold;transform:scaleX(0.8889);transform-origin:0 0;">Комплекс</div>
<div class="t" style="left:154.60px;top:680.43px;font-size:2.00px;color:#333;font-family:'Liberation Serif',serif;font-weight:bold;transform:scaleX(1.1963);transform-origin:0 0;">• совокупность предприятий и организаций,</div>
<div class="t" style="left:154.60px;top:683.33px;font-size:2.00px;color:#333;font-family:'Liberation Serif',serif;font-weight:bold;transform:scaleX(1.2776);transform-origin:0 0;">производящих однородную продукцию</div>
<div class="t" style="left:154.60px;top:686.23px;font-size:2.00px;color:#333;font-family:'Liberation Serif',serif;font-weight:bold;transform:scaleX(1.1964);transform-origin:0 0;">и выполняющих одинаковые функции</div>
<div class="a" style="left:152.00px;top:692.00px;width:53.70px;height:11.00px;background:#eef0f1;border:0.7px solid #a9b4b7;border-radius:1.5px"></div>
<div class="a" style="left:134.70px;top:691.40px;width:17.90px;height:12.00px;background:#8fa2a6;border-radius:2px"></div>
<div class="t" style="left:138.60px;top:696.22px;font-size:2.60px;color:#f4f4f4;font-family:'Liberation Serif',serif;font-weight:bold;transform:scaleX(1.1929);transform-origin:0 0;">Сектор</div>
<div class="t" style="left:154.60px;top:693.33px;font-size:2.00px;color:#333;font-family:'Liberation Serif',serif;font-weight:bold;transform:scaleX(1.1963);transform-origin:0 0;">• совокупность предприятий и организаций,</div>
<div class="t" style="left:154.60px;top:696.23px;font-size:2.00px;color:#333;font-family:'Liberation Serif',serif;font-weight:bold;transform:scaleX(1.2776);transform-origin:0 0;">производящих однородную продукцию</div>
<div class="a" style="left:152.00px;top:704.90px;width:53.70px;height:11.00px;background:#eef0f1;border:0.7px solid #a9b4b7;border-radius:1.5px"></div>
<div class="a" style="left:134.70px;top:704.30px;width:17.90px;height:12.00px;background:#8fa2a6;border-radius:2px"></div>
<div class="t" style="left:138.60px;top:709.12px;font-size:2.60px;color:#f4f4f4;font-family:'Liberation Serif',serif;font-weight:bold;transform:scaleX(1.3760);transform-origin:0 0;">Округ</div>
<div class="t" style="left:154.60px;top:706.23px;font-size:2.00px;color:#333;font-family:'Liberation Serif',serif;font-weight:bold;transform:scaleX(1.1963);transform-origin:0 0;">• совокупность предприятий и организаций,</div>
<div class="t" style="left:154.60px;top:709.12px;font-size:2.00px;color:#333;font-family:'Liberation Serif',serif;font-weight:bold;transform:scaleX(1.2776);transform-origin:0 0;">производящих однородную продукцию</div>
<div class="t" style="left:154.60px;top:712.02px;font-size:2.00px;color:#333;font-family:'Liberation Serif',serif;font-weight:bold;transform:scaleX(1.1964);transform-origin:0 0;">и выполняющих одинаковые функции</div>
<div class="a" style="left:116.20px;top:733.50px;width:120.60px;height:68.00px;background:#fff;outline:1px solid #dedede"></div>
<div class="a" style="left:119.90px;top:737.60px;width:113.20px;height:60.30px;background:#e9e9ea;border:1px solid #4a4a4a"></div>
<div class="t" style="left:100.00px;top:732.26px;font-size:10.80px;color:#444;">7</div>
<div class="a" style="left:134.00px;top:737.20px;width:68.00px;height:4.40px;background:#e9e9ea;"></div>
<div class="t" style="left:136.30px;top:737.85px;font-size:4.00px;color:#333;font-family:'Liberation Serif',serif;font-weight:bold;transform:scaleX(1.2353);transform-origin:0 0;">Общественное производство</div>
<div class="a" style="left:126.60px;top:744.20px;width:79.80px;height:51.00px;background:#eeeeee;border-radius:2px"></div>
<div class="a" style="left:207.10px;top:738.80px;width:25.90px;height:56.40px;overflow:hidden;background:#4a4e48"><svg class="a" style="left:-2px;top:-2px;filter:blur(0.9px)" width="29.90" height="60.40" viewBox="-2 -2 29.90 60.40"><g transform="scale(0.8633 1.0071)"><rect x="-3" y="-3" width="36" height="62" fill="#62645a"/>
<ellipse cx="8" cy="4" rx="9" ry="3" fill="#5a5f63"/><ellipse cx="22" cy="9" rx="9" ry="3.500" fill="#8a7450" opacity="0.800"/><ellipse cx="7" cy="13" rx="8" ry="3" fill="#86704c" opacity="0.800"/><ellipse cx="20" cy="16" rx="10" ry="2.600" fill="#4e6068" opacity="0.900"/><ellipse cx="14" cy="7" rx="4" ry="1.600" fill="#9a7a4a" opacity="0.700"/>
<path d="M-2 18.500l17 4.500v3l-17-2z" fill="#b9cadb"/><path d="M-2 23.500l12 2v3.500l-12-1z" fill="#8fa3b8"/>
<path d="M16 21.500l15-2.500v8.500h-17z" fill="#2c59a8"/><path d="M20 19.500h5v1.600h-5z" fill="#dfe6ee"/>
<path d="M12 27l19 0.500v6l-16-1z" fill="#6e6634"/>
<path d="M-2 27h7v9h-7z" fill="#17222e"/><path d="M16 33h15v9h-15z" fill="#2b3230"/>
<path d="M5 29h10.500v7h-10.500z" fill="#e6e1c2"/><path d="M13.600 26h2.400v9h-2.400z" fill="#dcb8a2"/>
<path d="M1 35l18 1v5.500l-18-1.500z" fill="#d6d4c4"/><path d="M14 38h7v3.500h-7z" fill="#ece6cf"/><path d="M24 34h5v4h-5z" fill="#e6e7e0"/>
<path d="M-2 41l8 0.500l2 5h-10z" fill="#2a7cc9"/><ellipse cx="22.500" cy="45" rx="9" ry="3.600" fill="#1b6cca"/><ellipse cx="26" cy="44" rx="3" ry="1" fill="#8a6a3a"/>
<path d="M-3 47.500c10-1.500 20 2 36 1v10h-36z" fill="#26261f"/><path d="M6 43h8v4h-8z" fill="#3a4a4a"/></g></svg></div>
<div class="a" style="left:130.5px;top:748.7px;width:31.5px;height:15.9px;border-radius:1.5px;background:linear-gradient(180deg,#3e6fc0 0%,#8fa9d8 32%,#e9d9c9 50%,#e09a3a 66%,#241a12 84%,#0c0a08 100%)"></div>
<div class="a" style="left:167.9px;top:748.7px;width:31.4px;height:15.9px;border-radius:1.5px;background:linear-gradient(90deg,#9a6a62 0 14%,#c9c4c9 14% 24%,#8a5a54 24% 36%,#d4cfd4 36% 44%,#94645c 44% 54%,#cfcacf 54% 80%,#8a5a54 80% 92%,#cfcacf 92%)"></div>
<div class="a" style="left:167.90px;top:760.60px;width:31.40px;height:4.00px;background:#b98a86;border-radius:0 0 1.5px 1.5px;opacity:0.85"></div>
<div class="a" style="left:130.50px;top:767.90px;width:31.50px;height:26.80px;background:#8fa2a6;border-radius:2px"></div>
<div class="a" style="left:166.30px;top:767.90px;width:35.70px;height:26.80px;background:#8fa2a6;border-radius:2px"></div>
<div class="t" style="left:136.60px;top:768.53px;font-size:2.00px;color:#f6f6f6;font-family:'Liberation Serif',serif;font-weight:bold;transform:scaleX(1.3931);transform-origin:0 0;">Материальное</div>
<div class="t" style="left:135.80px;top:771.08px;font-size:2.00px;color:#f6f6f6;font-family:'Liberation Serif',serif;font-weight:bold;transform:scaleX(1.6587);transform-origin:0 0;">производство</div>
<div class="t" style="left:133.60px;top:773.63px;font-size:2.00px;color:#f6f6f6;font-family:'Liberation Serif',serif;font-weight:bold;transform:scaleX(1.1172);transform-origin:0 0;">совокупность отраслей и</div>
<div class="t" style="left:134.40px;top:776.18px;font-size:2.00px;color:#f6f6f6;font-family:'Liberation Serif',serif;font-weight:bold;transform:scaleX(1.2770);transform-origin:0 0;">видов деятельности,</div>
<div class="t" style="left:132.60px;top:778.73px;font-size:2.00px;color:#f6f6f6;font-family:'Liberation Serif',serif;font-weight:bold;transform:scaleX(1.1529);transform-origin:0 0;">создающих материальные</div>
<div class="t" style="left:137.60px;top:781.28px;font-size:2.00px;color:#f6f6f6;font-family:'Liberation Serif',serif;font-weight:bold;transform:scaleX(1.2836);transform-origin:0 0;">блага в форме</div>
<div class="t" style="left:134.20px;top:783.83px;font-size:2.00px;color:#f6f6f6;font-family:'Liberation Serif',serif;font-weight:bold;transform:scaleX(1.2682);transform-origin:0 0;">продуктов, энергии и</div>
<div class="t" style="left:136.00px;top:786.38px;font-size:2.00px;color:#f6f6f6;font-family:'Liberation Serif',serif;font-weight:bold;transform:scaleX(0.9027);transform-origin:0 0;">услуг производственного</div>
<div class="t" style="left:170.00px;top:768.53px;font-size:2.00px;color:#f6f6f6;font-family:'Liberation Serif',serif;font-weight:bold;transform:scaleX(1.0219);transform-origin:0 0;">Нематериальное производство</div>
<div class="t" style="left:180.00px;top:771.08px;font-size:2.00px;color:#f6f6f6;font-family:'Liberation Serif',serif;font-weight:bold;transform:scaleX(1.0898);transform-origin:0 0;">(услуги)</div>
<div class="t" style="left:172.00px;top:773.63px;font-size:2.00px;color:#f6f6f6;font-family:'Liberation Serif',serif;font-weight:bold;transform:scaleX(1.1768);transform-origin:0 0;">совокупность отраслей</div>
<div class="t" style="left:169.00px;top:776.18px;font-size:2.00px;color:#f6f6f6;font-family:'Liberation Serif',serif;font-weight:bold;transform:scaleX(1.0833);transform-origin:0 0;">производство нематериальных</div>
<div class="t" style="left:168.80px;top:778.73px;font-size:2.00px;color:#f6f6f6;font-family:'Liberation Serif',serif;font-weight:bold;transform:scaleX(1.0893);transform-origin:0 0;">благ и услуг, удовлетворяющих</div>
<div class="t" style="left:170.40px;top:781.28px;font-size:2.00px;color:#f6f6f6;font-family:'Liberation Serif',serif;font-weight:bold;transform:scaleX(1.2951);transform-origin:0 0;">потребности населения</div>
<div class="t" style="left:169.20px;top:783.83px;font-size:2.00px;color:#f6f6f6;font-family:'Liberation Serif',serif;font-weight:bold;transform:scaleX(1.6770);transform-origin:0 0;">и общества в целом</div>
<div class="a" style="left:115px;top:814.10px;width:124px;height:18.30px;overflow:hidden"><div class="a" style="left:1.2px;top:1px;width:120.6px;height:68px;background:#fff;outline:1px solid #dedede"></div><div class="a" style="left:4.9px;top:5.1px;width:113.2px;height:60.3px;background:#e9e9ea;border:1px solid #4a4a4a"></div><div class="a" style="left:22px;top:5.1px;width:87.3px;height:9px;background:linear-gradient(180deg,#dfe3e5,#cdd2d4)"></div><div class="a" style="left:22px;top:14.700px;width:87.3px;height:4px;background:#f0c6be"></div></div>
<div class="t" style="left:160.00px;top:822.92px;font-size:3.20px;color:#222;font-family:'Liberation Serif',serif;font-weight:bold;transform:scaleX(1.0924);transform-origin:0 0;">Национальная экономика</div>
<div class="t" style="left:100.00px;top:813.86px;font-size:10.80px;color:#444;">8</div>
<svg class="a" style="left:173.20px;top:299.00px;" width="9.6" height="14" viewBox="0 0 9.6 14"><path d="M0.700 0.600v10.400l2.600-2.300l1.900 4.300l1.700-0.800l-1.900-4.100h3.500z" fill="#fff" stroke="#222" stroke-width="0.900" stroke-linejoin="round"/></svg>
<!-- s_status -->
<div class="a" style="left:95.00px;top:832.40px;width:1334.00px;height:0.80px;background:#d9d9d9;"></div>
<div class="a" style="left:95px;top:833px;width:1334px;height:11px;overflow:hidden"><div class="t" style="left:2.80px;top:2.96px;font-size:8.20px;color:#3a3a3a;letter-spacing:-0.357px;">Слайд 1 из 69</div>
<div class="t" style="left:87.80px;top:2.96px;font-size:8.20px;color:#3a3a3a;letter-spacing:-0.171px;">русский</div>
<div class="t" style="left:973.40px;top:2.96px;font-size:8.20px;color:#3a3a3a;letter-spacing:-0.194px;">Заметки</div>
<div class="t" style="left:1030.20px;top:2.96px;font-size:8.20px;color:#3a3a3a;letter-spacing:0.017px;">Примечания</div>
<div class="t" style="left:1292.70px;top:2.96px;font-size:8.20px;color:#3a3a3a;letter-spacing:-0.763px;">108 %</div>
<svg class="a" style="left:65.30px;top:2.00px" width="10" height="9" viewBox="0 0 10 9"><g fill="none" stroke="#666" stroke-width="0.800"><rect x="0.400" y="0.400" width="4.400" height="7.800"/><rect x="5" y="0.400" width="4.400" height="7.800"/><path d="M6.400 2.400l1.800 3.600M8.200 2.400l-1.800 3.600" stroke-width="0.700"/></g></svg><svg class="a" style="left:961.80px;top:3.00px" width="8.6" height="8" viewBox="0 0 8.6 8"><path d="M0.200 5.400h8.200M0.200 7.200h8.200M2 3.400h4.600M4.300 0.200l-2 2.200h4z" fill="#555" stroke="#555" stroke-width="0.700"/></svg><svg class="a" style="left:1018.00px;top:2.20px" width="10" height="9" viewBox="0 0 10 9"><path d="M0.400 0.400h9.200v6h-5l-2.400 2.200v-2.200h-1.800z" fill="#555"/></svg><div class="a" style="left:1091.40px;top:0.6px;width:26px;height:11px;background:#c8c8c8"></div><svg class="a" style="left:1099.60px;top:2.80px" width="10.4" height="8.4" viewBox="0 0 10.4 8.4"><g fill="none" stroke="#555" stroke-width="0.800"><rect x="0.400" y="0.400" width="9.600" height="8"/><path d="M2.800 0.400v8M2.800 4h7.200"/><rect x="4.600" y="1.600" width="3.600" height="1.400" fill="#555" stroke="none"/></g></svg><svg class="a" style="left:1126.20px;top:2.80px" width="10" height="8.4" viewBox="0 0 10 8.4"><g fill="none" stroke="#555" stroke-width="0.800"><rect x="0.400" y="0.400" width="3.400" height="2.800"/><rect x="6" y="0.400" width="3.400" height="2.800"/><rect x="0.400" y="5.200" width="3.400" height="2.800"/><rect x="6" y="5.200" width="3.400" height="2.800"/></g></svg><svg class="a" style="left:1152.60px;top:2.60px" width="10" height="8.6" viewBox="0 0 10 8.6"><g fill="none" stroke="#555" stroke-width="0.800"><path d="M0.400 0.800h3.600l1 1l1-1h3.600v7h-3.600l-1 0.800l-1-0.800h-3.600z"/><path d="M5 1.800v6.600"/><path d="M6.200 2.800h2.400v2.600h-2.400z" fill="#555"/></g></svg><svg class="a" style="left:1179.20px;top:2.40px" width="9.2" height="9" viewBox="0 0 9.2 9"><g fill="none" stroke="#555" stroke-width="0.800"><path d="M0 0.600h9.200M0.800 0.600v5h7.600v-5M4.600 5.600v2.600M2.600 8.400h4"/></g></svg><svg class="a" style="left:1201.10px;top:6.40px" width="4.2" height="1.2" viewBox="0 0 4.2 1.2"><rect width="4.200" height="1.100" fill="#555"/></svg><div class="a" style="left:1208.50px;top:6.6px;width:69px;height:0.8px;background:#8a8a8a"></div><div class="a" style="left:1242.30px;top:3px;width:3px;height:8px;background:#666"></div><svg class="a" style="left:1280.20px;top:4.60px" width="4.6" height="4.6" viewBox="0 0 4.6 4.6"><path d="M0 2.300h4.600M2.300 0v4.600" stroke="#555" stroke-width="1"/></svg><svg class="a" style="left:1324.00px;top:2.00px" width="9" height="9" viewBox="0 0 9 9"><g fill="none" stroke="#555" stroke-width="0.800"><rect x="0.400" y="0.400" width="8" height="8.400"/><path d="M1.600 1.600l2 2M7.200 1.600l-2 2M1.600 7.600l2-2M7.200 7.600l-2-2" stroke-width="0.900"/></g></svg></div>
<!-- s_zoombar -->
<div class="t" style="left:400.70px;top:879.95px;font-size:12.00px;color:#c9c9c9;font-family:'Liberation Serif',serif;letter-spacing:-0.078px;">Участники</div>
<div class="t" style="left:480.00px;top:879.95px;font-size:12.00px;color:#23d959;font-family:'Liberation Serif',serif;">Демонстрация экрана</div>
<div class="t" style="left:634.30px;top:879.95px;font-size:12.00px;color:#c9c9c9;font-family:'Liberation Serif',serif;letter-spacing:-0.430px;">Чат</div>
<div class="t" style="left:705.60px;top:879.95px;font-size:12.00px;color:#c9c9c9;font-family:'Liberation Serif',serif;letter-spacing:0.036px;">Запись</div>
<div class="t" style="left:775.00px;top:879.95px;font-size:12.00px;color:#c9c9c9;font-family:'Liberation Serif',serif;letter-spacing:0.034px;">Показать субтитры</div>
<div class="t" style="left:897.00px;top:880.35px;font-size:11.40px;color:#c9c9c9;transform:scaleX(1.0894);transform-origin:0 0;">AI Companion</div>
<div class="t" style="left:1006.70px;top:879.95px;font-size:12.00px;color:#c9c9c9;font-family:'Liberation Serif',serif;letter-spacing:-0.018px;">Реакции</div>
<div class="t" style="left:1079.70px;top:879.95px;font-size:12.00px;color:#c9c9c9;font-family:'Liberation Serif',serif;letter-spacing:0.052px;">Настройки</div>
<div class="t" style="left:1159.70px;top:879.95px;font-size:12.00px;color:#c9c9c9;font-family:'Liberation Serif',serif;letter-spacing:0.024px;">Подробнее</div>
<svg class="a" style="left:416.00px;top:854.60px;" width="25" height="18" viewBox="0 0 25 18"><g fill="#b9b9b9"><circle cx="7.600" cy="4.600" r="4.200"/><path d="M0 17.400c0-5 2.800-7.400 7.600-7.400s7.600 2.400 7.600 7.400z"/><circle cx="18.400" cy="7" r="3.300"/><path d="M16.600 17.400c0-3-0.600-4.600-2-6c1-0.500 2.200-0.800 3.800-0.800c4 0 6 2 6 6.800z"/></g></svg>
<div class="t" style="left:440.60px;top:854.00px;font-size:10.40px;color:#e6e6e6;">3</div>
<div class="a" style="left:523.60px;top:854.00px;width:24.60px;height:18.40px;background:#23d959;border-radius:3.5px"></div>
<svg class="a" style="left:530.60px;top:857.60px;" width="10.6" height="11.4" viewBox="0 0 10.6 11.4"><path d="M5.300 10.600v-9M1.300 5l4-4l4 4" fill="none" stroke="#0b0b0b" stroke-width="2.100"/></svg>
<svg class="a" style="left:632.80px;top:854.00px;" width="20.6" height="18.6" viewBox="0 0 20.6 18.6"><path d="M3 0h14.400a3 3 0 0 1 3 3v7.400a3 3 0 0 1-3 3h-7.400l-5.600 4.800v-4.800h-1.400a3 3 0 0 1-3-3v-7.400a3 3 0 0 1 3-3z" fill="#b9b9b9"/></svg>
<svg class="a" style="left:668.80px;top:857.60px;" width="8.4" height="5.4" viewBox="0 0 8.4 5.4"><path d="M0.600 4.800l3.600-3.800l3.600 3.800" fill="none" stroke="#b9b9b9" stroke-width="1.400"/></svg>
<svg class="a" style="left:712.60px;top:853.00px;" width="20.6" height="20.6" viewBox="0 0 20.6 20.6"><circle cx="10.300" cy="10.300" r="9.300" fill="none" stroke="#b9b9b9" stroke-width="1.600"/><circle cx="10.300" cy="10.300" r="6.700" fill="#b9b9b9"/></svg>
<div class="a" style="left:811.60px;top:854.00px;width:24.40px;height:17.60px;background:#b9b9b9;border-radius:3px"></div>
<div class="t" style="left:816.80px;top:858.23px;font-size:10.60px;color:#1a1a1a;letter-spacing:-1.310px;font-weight:bold;">CC</div>
<svg class="a" style="left:870.40px;top:857.60px;" width="9.2" height="5.4" viewBox="0 0 9.2 5.4"><path d="M0.600 4.800l4-3.800l4 3.800" fill="none" stroke="#b9b9b9" stroke-width="1.400"/></svg>
<svg class="a" style="left:924.40px;top:850.40px;" width="25" height="25" viewBox="0 0 25 25"><g fill="#b9b9b9"><path d="M10 3c1.400 7 3.600 9.400 10.200 10.600c-6.600 1.200-8.800 3.600-10.200 10.600c-1.400-7-3.600-9.400-10.200-10.600c6.600-1.200 8.800-3.600 10.200-10.600z"/><path d="M19.600 0c0.600 2.800 1.400 3.800 4.200 4.400c-2.800 0.600-3.600 1.600-4.200 4.400c-0.600-2.800-1.400-3.800-4.200-4.400c2.800-0.600 3.600-1.600 4.200-4.400z"/></g></svg>
<svg class="a" style="left:1018.40px;top:851.60px;" width="22" height="22" viewBox="0 0 22 22"><circle cx="9" cy="12.400" r="8.600" fill="#b9b9b9"/><circle cx="6.200" cy="10.400" r="1.300" fill="#111"/><circle cx="11.800" cy="10.400" r="1.300" fill="#111"/><path d="M4.800 14c1.200 3.400 7.200 3.400 8.400 0z" fill="#111"/><circle cx="17.400" cy="4.400" r="4.400" fill="#030303"/><path d="M17.400 1.400v6M14.400 4.400h6" stroke="#b9b9b9" stroke-width="1.300"/></svg>
<svg class="a" style="left:1098.20px;top:853.20px;" width="20" height="20" viewBox="0 0 20 20"><g transform="translate(10 10)" fill="#b9b9b9"><circle r="7.600"/><rect x="-2.600" y="-10" width="5.200" height="5" rx="1" transform="rotate(0)"/><rect x="-2.600" y="-10" width="5.200" height="5" rx="1" transform="rotate(60)"/><rect x="-2.600" y="-10" width="5.200" height="5" rx="1" transform="rotate(120)"/><rect x="-2.600" y="-10" width="5.200" height="5" rx="1" transform="rotate(180)"/><rect x="-2.600" y="-10" width="5.200" height="5" rx="1" transform="rotate(240)"/><rect x="-2.600" y="-10" width="5.200" height="5" rx="1" transform="rotate(300)"/><circle r="3.400" fill="#030303"/></g></svg>
<svg class="a" style="left:1177.40px;top:860.40px;" width="21" height="5" viewBox="0 0 21 5"><g fill="#b9b9b9"><circle cx="2.500" cy="2.500" r="2"/><circle cx="10.500" cy="2.500" r="2"/><circle cx="18.500" cy="2.500" r="2"/></g></svg>
<!-- s_banner -->
<div class="a" style="left:515.20px;top:121.00px;width:368.80px;height:25.40px;background:#23d959;border-radius:0 0 0 5px"></div>
<div class="a" style="left:884.00px;top:121.00px;width:124.80px;height:25.40px;background:#222224;border-radius:0 0 5px 0"></div>
<div class="t" style="left:539.00px;top:127.51px;font-size:13.00px;color:#161616;font-family:'Liberation Serif',serif;font-weight:bold;white-space:pre;">Вы просматриваете экран  Антонина Шаркова</div>
<svg class="a" style="left:821.00px;top:126.00px;" width="13" height="16" viewBox="0 0 13 16"><g fill="none" stroke="#1f3a24" stroke-width="1.100" stroke-linecap="round"><rect x="4.400" y="1.400" width="4" height="7.600" rx="2" fill="#1f3a24" stroke="none"/><path d="M2.400 7c0 2.600 1.800 4 4 4s4-1.400 4-4M6.400 11v2.200"/><path d="M11.600 0.800L1.800 13.600" stroke-width="1.400"/></g></svg>
<svg class="a" style="left:844.40px;top:127.20px;" width="12" height="12" viewBox="0 0 12 12"><circle cx="6" cy="6" r="5.300" fill="none" stroke="#1f3a24" stroke-width="1"/><circle cx="6" cy="6" r="2.700" fill="#e02828"/></svg>
<div class="t" style="left:907.40px;top:121.68px;font-size:12.80px;color:#fff;font-family:'Liberation Serif',serif;letter-spacing:0.009px;font-weight:bold;">Настройки</div>
<div class="t" style="left:908.60px;top:134.68px;font-size:12.80px;color:#fff;font-family:'Liberation Serif',serif;letter-spacing:0.060px;font-weight:bold;">просмотра</div>
<svg class="a" style="left:990.40px;top:129.20px;" width="9.6" height="7.6" viewBox="0 0 9.6 7.6"><path d="M0.800 3.800l2.800 2.800l5.200-5.600" fill="none" stroke="#fff" stroke-width="1.700"/></svg>
</body>
</html>
